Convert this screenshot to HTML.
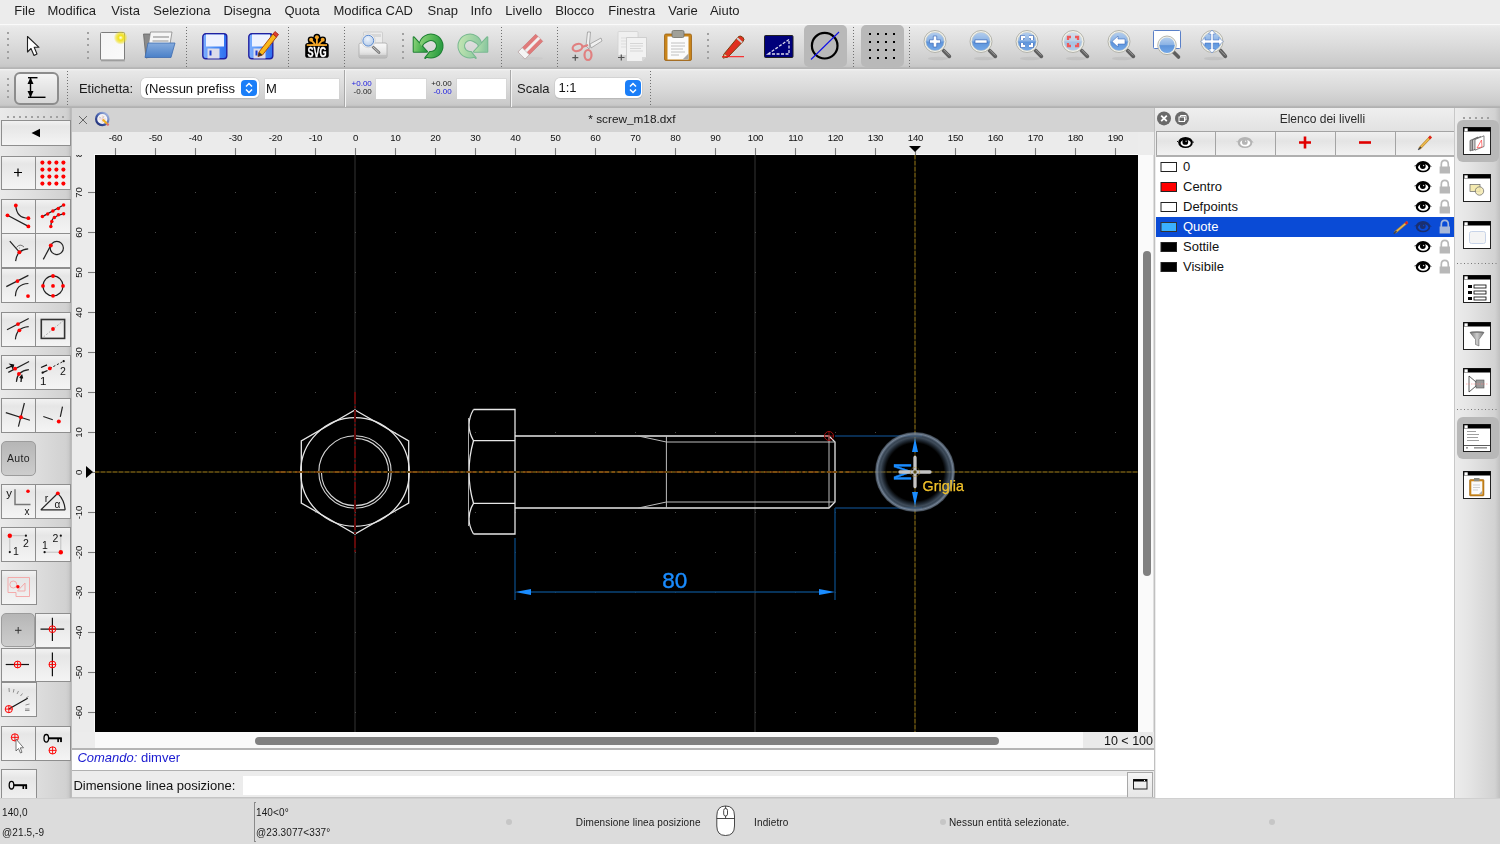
<!DOCTYPE html>
<html><head><meta charset="utf-8"><style>
html,body{margin:0;padding:0}
body{width:1500px;height:844px;overflow:hidden;position:relative;background:#ececec;font-family:"Liberation Sans", sans-serif}
.t{position:absolute;white-space:pre;line-height:1;font-family:"Liberation Sans", sans-serif}
.b{position:absolute;box-sizing:border-box}
svg.b{overflow:visible}
</style></head><body>
<div class="b" style="left:0px;top:0px;width:1500px;height:24px;background:#ececec"></div>
<div class="t" style="left:14.2px;top:4.00px;font-size:13px;color:#1e1e1e;">File</div>
<div class="t" style="left:47.5px;top:4.00px;font-size:13px;color:#1e1e1e;">Modifica</div>
<div class="t" style="left:111.3px;top:4.00px;font-size:13px;color:#1e1e1e;">Vista</div>
<div class="t" style="left:153.3px;top:4.00px;font-size:13px;color:#1e1e1e;">Seleziona</div>
<div class="t" style="left:223.4px;top:4.00px;font-size:13px;color:#1e1e1e;">Disegna</div>
<div class="t" style="left:284.4px;top:4.00px;font-size:13px;color:#1e1e1e;">Quota</div>
<div class="t" style="left:333.5px;top:4.00px;font-size:13px;color:#1e1e1e;">Modifica CAD</div>
<div class="t" style="left:427.6px;top:4.00px;font-size:13px;color:#1e1e1e;">Snap</div>
<div class="t" style="left:470.5px;top:4.00px;font-size:13px;color:#1e1e1e;">Info</div>
<div class="t" style="left:505.3px;top:4.00px;font-size:13px;color:#1e1e1e;">Livello</div>
<div class="t" style="left:555.3px;top:4.00px;font-size:13px;color:#1e1e1e;">Blocco</div>
<div class="t" style="left:608.2px;top:4.00px;font-size:13px;color:#1e1e1e;">Finestra</div>
<div class="t" style="left:668.3px;top:4.00px;font-size:13px;color:#1e1e1e;">Varie</div>
<div class="t" style="left:709.9px;top:4.00px;font-size:13px;color:#1e1e1e;">Aiuto</div>
<div class="b" style="left:0px;top:24px;width:1500px;height:45px;background:linear-gradient(#f0f0f0 0px,#e9e9e9 3px,#dcdcdc 20px,#cbcbcb 40px,#c6c6c6 42.5px,#b2b2b2 44px,#b8b8b8 45px)"></div>
<div class="b" style="left:0px;top:24px;width:1500px;height:1px;background:#fafafa"></div>
<div class="b" style="left:0px;top:69px;width:1500px;height:39px;background:linear-gradient(#f4f4f4 0px,#e8e8e8 2px,#d9d9d9 20px,#cacaca 35px,#c4c4c4 36.5px,#aeaeae 38px,#b4b4b4 39px)"></div>
<div class="b" style="left:7px;top:32.0px;width:2px;height:2px;background:#a0a0a0"></div>
<div class="b" style="left:7px;top:38.2px;width:2px;height:2px;background:#a0a0a0"></div>
<div class="b" style="left:7px;top:44.4px;width:2px;height:2px;background:#a0a0a0"></div>
<div class="b" style="left:7px;top:50.6px;width:2px;height:2px;background:#a0a0a0"></div>
<div class="b" style="left:7px;top:56.8px;width:2px;height:2px;background:#a0a0a0"></div>
<div class="b" style="left:87px;top:32.0px;width:2px;height:2px;background:#a0a0a0"></div>
<div class="b" style="left:87px;top:38.2px;width:2px;height:2px;background:#a0a0a0"></div>
<div class="b" style="left:87px;top:44.4px;width:2px;height:2px;background:#a0a0a0"></div>
<div class="b" style="left:87px;top:50.6px;width:2px;height:2px;background:#a0a0a0"></div>
<div class="b" style="left:87px;top:56.8px;width:2px;height:2px;background:#a0a0a0"></div>
<svg class="b" style="left:186px;top:27px;" width="1" height="40" viewBox="0 0 1 40"><rect x="0" y="0" width="1" height="1" fill="#707070"/><rect x="0" y="3" width="1" height="1" fill="#707070"/><rect x="0" y="6" width="1" height="1" fill="#707070"/><rect x="0" y="9" width="1" height="1" fill="#707070"/><rect x="0" y="12" width="1" height="1" fill="#707070"/><rect x="0" y="15" width="1" height="1" fill="#707070"/><rect x="0" y="18" width="1" height="1" fill="#707070"/><rect x="0" y="21" width="1" height="1" fill="#707070"/><rect x="0" y="24" width="1" height="1" fill="#707070"/><rect x="0" y="27" width="1" height="1" fill="#707070"/><rect x="0" y="30" width="1" height="1" fill="#707070"/><rect x="0" y="33" width="1" height="1" fill="#707070"/><rect x="0" y="36" width="1" height="1" fill="#707070"/><rect x="0" y="39" width="1" height="1" fill="#707070"/></svg>
<svg class="b" style="left:288px;top:27px;" width="1" height="40" viewBox="0 0 1 40"><rect x="0" y="0" width="1" height="1" fill="#707070"/><rect x="0" y="3" width="1" height="1" fill="#707070"/><rect x="0" y="6" width="1" height="1" fill="#707070"/><rect x="0" y="9" width="1" height="1" fill="#707070"/><rect x="0" y="12" width="1" height="1" fill="#707070"/><rect x="0" y="15" width="1" height="1" fill="#707070"/><rect x="0" y="18" width="1" height="1" fill="#707070"/><rect x="0" y="21" width="1" height="1" fill="#707070"/><rect x="0" y="24" width="1" height="1" fill="#707070"/><rect x="0" y="27" width="1" height="1" fill="#707070"/><rect x="0" y="30" width="1" height="1" fill="#707070"/><rect x="0" y="33" width="1" height="1" fill="#707070"/><rect x="0" y="36" width="1" height="1" fill="#707070"/><rect x="0" y="39" width="1" height="1" fill="#707070"/></svg>
<svg class="b" style="left:344px;top:27px;" width="1" height="40" viewBox="0 0 1 40"><rect x="0" y="0" width="1" height="1" fill="#707070"/><rect x="0" y="3" width="1" height="1" fill="#707070"/><rect x="0" y="6" width="1" height="1" fill="#707070"/><rect x="0" y="9" width="1" height="1" fill="#707070"/><rect x="0" y="12" width="1" height="1" fill="#707070"/><rect x="0" y="15" width="1" height="1" fill="#707070"/><rect x="0" y="18" width="1" height="1" fill="#707070"/><rect x="0" y="21" width="1" height="1" fill="#707070"/><rect x="0" y="24" width="1" height="1" fill="#707070"/><rect x="0" y="27" width="1" height="1" fill="#707070"/><rect x="0" y="30" width="1" height="1" fill="#707070"/><rect x="0" y="33" width="1" height="1" fill="#707070"/><rect x="0" y="36" width="1" height="1" fill="#707070"/><rect x="0" y="39" width="1" height="1" fill="#707070"/></svg>
<div class="b" style="left:402px;top:33px;width:2px;height:2px;background:#a0a0a0"></div>
<div class="b" style="left:402px;top:39px;width:2px;height:2px;background:#a0a0a0"></div>
<div class="b" style="left:402px;top:45px;width:2px;height:2px;background:#a0a0a0"></div>
<div class="b" style="left:402px;top:51px;width:2px;height:2px;background:#a0a0a0"></div>
<div class="b" style="left:402px;top:57px;width:2px;height:2px;background:#a0a0a0"></div>
<svg class="b" style="left:501px;top:27px;" width="1" height="40" viewBox="0 0 1 40"><rect x="0" y="0" width="1" height="1" fill="#707070"/><rect x="0" y="3" width="1" height="1" fill="#707070"/><rect x="0" y="6" width="1" height="1" fill="#707070"/><rect x="0" y="9" width="1" height="1" fill="#707070"/><rect x="0" y="12" width="1" height="1" fill="#707070"/><rect x="0" y="15" width="1" height="1" fill="#707070"/><rect x="0" y="18" width="1" height="1" fill="#707070"/><rect x="0" y="21" width="1" height="1" fill="#707070"/><rect x="0" y="24" width="1" height="1" fill="#707070"/><rect x="0" y="27" width="1" height="1" fill="#707070"/><rect x="0" y="30" width="1" height="1" fill="#707070"/><rect x="0" y="33" width="1" height="1" fill="#707070"/><rect x="0" y="36" width="1" height="1" fill="#707070"/><rect x="0" y="39" width="1" height="1" fill="#707070"/></svg>
<svg class="b" style="left:557px;top:27px;" width="1" height="40" viewBox="0 0 1 40"><rect x="0" y="0" width="1" height="1" fill="#707070"/><rect x="0" y="3" width="1" height="1" fill="#707070"/><rect x="0" y="6" width="1" height="1" fill="#707070"/><rect x="0" y="9" width="1" height="1" fill="#707070"/><rect x="0" y="12" width="1" height="1" fill="#707070"/><rect x="0" y="15" width="1" height="1" fill="#707070"/><rect x="0" y="18" width="1" height="1" fill="#707070"/><rect x="0" y="21" width="1" height="1" fill="#707070"/><rect x="0" y="24" width="1" height="1" fill="#707070"/><rect x="0" y="27" width="1" height="1" fill="#707070"/><rect x="0" y="30" width="1" height="1" fill="#707070"/><rect x="0" y="33" width="1" height="1" fill="#707070"/><rect x="0" y="36" width="1" height="1" fill="#707070"/><rect x="0" y="39" width="1" height="1" fill="#707070"/></svg>
<div class="b" style="left:707px;top:33px;width:2px;height:2px;background:#a0a0a0"></div>
<div class="b" style="left:707px;top:39px;width:2px;height:2px;background:#a0a0a0"></div>
<div class="b" style="left:707px;top:45px;width:2px;height:2px;background:#a0a0a0"></div>
<div class="b" style="left:707px;top:51px;width:2px;height:2px;background:#a0a0a0"></div>
<div class="b" style="left:707px;top:57px;width:2px;height:2px;background:#a0a0a0"></div>
<svg class="b" style="left:853px;top:27px;" width="1" height="40" viewBox="0 0 1 40"><rect x="0" y="0" width="1" height="1" fill="#707070"/><rect x="0" y="3" width="1" height="1" fill="#707070"/><rect x="0" y="6" width="1" height="1" fill="#707070"/><rect x="0" y="9" width="1" height="1" fill="#707070"/><rect x="0" y="12" width="1" height="1" fill="#707070"/><rect x="0" y="15" width="1" height="1" fill="#707070"/><rect x="0" y="18" width="1" height="1" fill="#707070"/><rect x="0" y="21" width="1" height="1" fill="#707070"/><rect x="0" y="24" width="1" height="1" fill="#707070"/><rect x="0" y="27" width="1" height="1" fill="#707070"/><rect x="0" y="30" width="1" height="1" fill="#707070"/><rect x="0" y="33" width="1" height="1" fill="#707070"/><rect x="0" y="36" width="1" height="1" fill="#707070"/><rect x="0" y="39" width="1" height="1" fill="#707070"/></svg>
<svg class="b" style="left:909px;top:27px;" width="1" height="40" viewBox="0 0 1 40"><rect x="0" y="0" width="1" height="1" fill="#707070"/><rect x="0" y="3" width="1" height="1" fill="#707070"/><rect x="0" y="6" width="1" height="1" fill="#707070"/><rect x="0" y="9" width="1" height="1" fill="#707070"/><rect x="0" y="12" width="1" height="1" fill="#707070"/><rect x="0" y="15" width="1" height="1" fill="#707070"/><rect x="0" y="18" width="1" height="1" fill="#707070"/><rect x="0" y="21" width="1" height="1" fill="#707070"/><rect x="0" y="24" width="1" height="1" fill="#707070"/><rect x="0" y="27" width="1" height="1" fill="#707070"/><rect x="0" y="30" width="1" height="1" fill="#707070"/><rect x="0" y="33" width="1" height="1" fill="#707070"/><rect x="0" y="36" width="1" height="1" fill="#707070"/><rect x="0" y="39" width="1" height="1" fill="#707070"/></svg>
<svg class="b" style="left:26px;top:35px;" width="16" height="24" viewBox="0 0 16 24"><path d="M1.5 1.5 L1.5 17 L5 13.5 L8 20.5 L11 19 L8.2 12.3 L13 12.3 Z" fill="#fff" stroke="#222" stroke-width="1.1" stroke-linejoin="round"/></svg>
<svg class="b" style="left:98px;top:30px;" width="32" height="34" viewBox="0 0 32 34"><defs><radialGradient id="glow"><stop offset="0" stop-color="#fffff0"/><stop offset="0.35" stop-color="#f2e21a"/><stop offset="0.7" stop-color="#f0e020" stop-opacity="0.6"/><stop offset="1" stop-color="#f0e020" stop-opacity="0"/></radialGradient>
<linearGradient id="pg" x1="0" y1="0" x2="1" y2="1"><stop offset="0" stop-color="#f4f4f4"/><stop offset="1" stop-color="#fafafa"/></linearGradient></defs>
<rect x="2.5" y="2.5" width="24" height="27.5" rx="1" fill="url(#pg)" stroke="#7c7c7c" stroke-width="1"/>
<rect x="3" y="30" width="24" height="1.5" fill="#999" opacity="0.6"/>
<circle cx="22.7" cy="7.7" r="7" fill="url(#glow)"/></svg>
<svg class="b" style="left:140px;top:30px;" width="38" height="32" viewBox="0 0 38 32"><defs><linearGradient id="fb" x1="0" y1="0" x2="0" y2="1"><stop offset="0" stop-color="#86acde"/><stop offset="1" stop-color="#4a80c8"/></linearGradient></defs>
<path d="M3.5 4 L10 4 L10 27 L6 28 Z" fill="#8a8a8a" stroke="#666" stroke-width="0.8"/>
<path d="M10.5 2 L32 2 L29 20 L7 24 Z" fill="#f6f6f6" stroke="#888" stroke-width="0.8"/>
<rect x="13" y="6" width="16" height="2" fill="#bbb"/><rect x="12.5" y="10" width="16" height="2" fill="#c4c4c4"/>
<path d="M8 13 L35 13 L31 27.5 L5 27.5 Z" fill="url(#fb)" stroke="#3d6cb0" stroke-width="0.8"/></svg>
<svg class="b" style="left:202px;top:33px;" width="27" height="28" viewBox="0 0 27 28"><defs><linearGradient id="flb1" x1="0" y1="0" x2="1" y2="0"><stop offset="0" stop-color="#7fb0ff"/><stop offset="0.5" stop-color="#4a8cf6"/><stop offset="1" stop-color="#2f6ef0"/></linearGradient></defs>
<rect x="0.8" y="0.8" width="24" height="25" rx="3" fill="url(#flb1)" stroke="#2020a0" stroke-width="1.4"/>
<rect x="4" y="1.5" width="18" height="12" fill="#eef2ff"/>
<rect x="5.5" y="15.5" width="12" height="10" fill="#dcdcea"/>
<rect x="7.5" y="17.5" width="2" height="5" fill="#1a3ad0"/></svg>
<svg class="b" style="left:248px;top:33px;" width="27" height="28" viewBox="0 0 27 28"><defs><linearGradient id="flb2" x1="0" y1="0" x2="1" y2="0"><stop offset="0" stop-color="#7fb0ff"/><stop offset="0.5" stop-color="#4a8cf6"/><stop offset="1" stop-color="#2f6ef0"/></linearGradient></defs>
<rect x="0.8" y="0.8" width="24" height="25" rx="3" fill="url(#flb2)" stroke="#2020a0" stroke-width="1.4"/>
<rect x="4" y="1.5" width="18" height="12" fill="#eef2ff"/>
<rect x="5.5" y="15.5" width="12" height="10" fill="#dcdcea"/>
<rect x="7.5" y="17.5" width="2" height="5" fill="#1a3ad0"/></svg>
<svg class="b" style="left:248px;top:28px;" width="30" height="30" viewBox="0 0 30 30"><path d="M11 24 L25 6 L28.5 9 L14.5 27 L10 28.5 Z" fill="#f8b81a" stroke="#b05010" stroke-width="1"/><path d="M25 6 L27 3.5 L30.5 6.5 L28.5 9Z" fill="#e04030" stroke="#a02010" stroke-width="0.8"/><path d="M10 28.5 L11 24 L14.5 27Z" fill="#333"/></svg>
<svg class="b" style="left:304px;top:33px;" width="26" height="26" viewBox="0 0 26 26"><g fill="#000" stroke="#000" stroke-width="2.6" stroke-linejoin="round">
<circle cx="12.9" cy="4.3" r="2.2"/><circle cx="7.1" cy="6.8" r="2.1"/><circle cx="18.7" cy="6.8" r="2.1"/>
<path d="M7.1 6.8 L11 11 M18.7 6.8 L14.8 11 M12.9 4.3 L12.9 11"/><path d="M5 11 L7.1 6.8 L12.9 4.3 L18.7 6.8 L21 11Z"/></g>
<rect x="1.2" y="10" width="23.5" height="14.8" rx="2.6" fill="#000"/>
<g fill="#f5a82a"><circle cx="12.9" cy="4.3" r="2"/><circle cx="7.1" cy="6.8" r="2"/><circle cx="18.7" cy="6.8" r="2"/></g>
<path d="M7.1 6.8 L11.2 11.5 M18.7 6.8 L14.6 11.5 M12.9 4.3 L12.9 11.5" stroke="#f5a82a" stroke-width="1.8"/>
<path d="M2.8 12.6 Q12.9 10 23 12.6 L23 12.8 L2.8 12.8Z" fill="#f5a82a"/><rect x="2.8" y="11.2" width="20.2" height="1.6" fill="#f5a82a"/>
<text x="0" y="0" transform="translate(13,23.6) scale(0.66,1)" text-anchor="middle" font-family="Liberation Sans" font-weight="bold" font-size="13.8" fill="#fff" stroke="#fff" stroke-width="0.3">SVG</text></svg>
<svg class="b" style="left:357px;top:31px;" width="32" height="29" viewBox="0 0 32 29"><defs><linearGradient id="pr" x1="0" y1="0" x2="0" y2="1"><stop offset="0" stop-color="#fafafa"/><stop offset="0.6" stop-color="#e6e6e6"/><stop offset="1" stop-color="#c4c4c4"/></linearGradient>
<radialGradient id="lens" cx="0.45" cy="0.35" r="0.7"><stop offset="0" stop-color="#eef4fc"/><stop offset="0.7" stop-color="#c4d6ee"/><stop offset="1" stop-color="#a8c0e0"/></radialGradient></defs>
<rect x="6.5" y="1" width="19" height="14" rx="1" fill="#ececec" stroke="#c8c8c8" stroke-width="0.8"/>
<rect x="15" y="3" width="9" height="3" fill="#d8d8d8"/>
<path d="M2 13.5 Q2 12 4 12 L28 12 Q30 12 30 13.5 L30 25.5 Q30 27 28 27 L4 27 Q2 27 2 25.5Z" fill="url(#pr)" stroke="#a8a8a8" stroke-width="0.8"/>
<rect x="2.5" y="24" width="27" height="3" fill="#b8b8b8" opacity="0.7"/>
<line x1="16" y1="16" x2="22" y2="21.5" stroke="#777" stroke-width="2.8" stroke-linecap="round"/>
<line x1="16" y1="16" x2="22" y2="21.5" stroke="#ddd" stroke-width="0.8" stroke-linecap="round"/>
<circle cx="11.3" cy="9.7" r="7" fill="#f0f0f0" stroke="#c8c8c8" stroke-width="0.6"/>
<circle cx="11.3" cy="9.7" r="5.4" fill="url(#lens)" stroke="#5a8ad0" stroke-width="1"/></svg>
<svg class="b" style="left:412px;top:32px;" width="32" height="28" viewBox="0 0 32 28"><defs><linearGradient id="ug" x1="0" y1="0" x2="1" y2="0.2"><stop offset="0" stop-color="#8ed27c"/><stop offset="0.5" stop-color="#5cbc5a"/><stop offset="1" stop-color="#2e9e44"/></linearGradient></defs><path d="M1.7 5.3 L1.7 19.7 L15 19.7 Z" fill="none" stroke="#1d7f32" stroke-width="2" stroke-linejoin="round"/><path d="M7.71 11.82 A11.5 11.5 0 1 1 14.3 24.5 L13.2 26 Q16 23 17.96 19.9 A6 6 0 1 0 16 8.8 Q11.5 10.5 9.7 14.3 Z" fill="none" stroke="#1d7f32" stroke-width="2" stroke-linejoin="round"/><path d="M1.7 5.3 L1.7 19.7 L15 19.7 Z" fill="url(#ug)"/><path d="M7.71 11.82 A11.5 11.5 0 1 1 14.3 24.5 L13.2 26 Q16 23 17.96 19.9 A6 6 0 1 0 16 8.8 Q11.5 10.5 9.7 14.3 Z" fill="url(#ug)"/></svg>
<svg class="b" style="left:459px;top:32px;" width="32" height="28" viewBox="0 0 32 28"><defs><linearGradient id="rg" x1="1" y1="0" x2="0" y2="0.2"><stop offset="0" stop-color="#c6e6b4"/><stop offset="0.5" stop-color="#a8d8a8"/><stop offset="1" stop-color="#8cc8a0"/></linearGradient></defs><g transform="translate(30,0) scale(-1,1)"><path d="M1.7 5.3 L1.7 19.7 L15 19.7 Z" fill="none" stroke="#78b890" stroke-width="2" stroke-linejoin="round"/><path d="M7.71 11.82 A11.5 11.5 0 1 1 14.3 24.5 L13.2 26 Q16 23 17.96 19.9 A6 6 0 1 0 16 8.8 Q11.5 10.5 9.7 14.3 Z" fill="none" stroke="#78b890" stroke-width="2" stroke-linejoin="round"/><path d="M1.7 5.3 L1.7 19.7 L15 19.7 Z" fill="url(#rg)"/><path d="M7.71 11.82 A11.5 11.5 0 1 1 14.3 24.5 L13.2 26 Q16 23 17.96 19.9 A6 6 0 1 0 16 8.8 Q11.5 10.5 9.7 14.3 Z" fill="url(#rg)"/></g></svg>
<svg class="b" style="left:515px;top:31px;" width="30" height="31" viewBox="0 0 30 31"><ellipse cx="17" cy="27.5" rx="11" ry="1.6" fill="#c8c8c8" opacity="0.8"/>
<g transform="rotate(-45 15 16)"><rect x="3" y="11" width="25" height="10" fill="#e07a7a" stroke="#c87070" stroke-width="0.6"/>
<rect x="3" y="14.5" width="25" height="3" fill="#f0f0f0"/><rect x="3" y="11" width="6" height="10" fill="#f4f4f4" stroke="#b0b0b0" stroke-width="0.6"/></g></svg>
<svg class="b" style="left:570px;top:30px;" width="32" height="32" viewBox="0 0 32 32"><g fill="none" stroke="#e08080" stroke-width="2.2"><ellipse cx="7.5" cy="17.5" rx="5" ry="3.5" transform="rotate(-20 7.5 17.5)"/><ellipse cx="18" cy="25" rx="3.5" ry="5"/></g>
<path d="M17.5 2 L20.5 2 L19 19 L16 16Z" fill="#f0f0f0" stroke="#909090" stroke-width="0.7"/>
<path d="M20 14 L31 8 L32 11 L21 18Z" fill="#f0f0f0" stroke="#909090" stroke-width="0.7"/>
<path d="M12 17 L18 15" stroke="#e08080" stroke-width="2.2"/>
<path d="M2.3 27.7 L8.3 27.7 M5.3 24.7 L5.3 30.7" stroke="#555" stroke-width="1.2"/></svg>
<svg class="b" style="left:616px;top:30px;" width="32" height="33" viewBox="0 0 32 33"><rect x="2" y="1.5" width="20" height="24" rx="1" fill="#f0f0f0" stroke="#d0d0d0" stroke-width="0.8"/>
<g stroke="#ddd" stroke-width="1"><line x1="5" y1="8" x2="17" y2="8"/><line x1="5" y1="11" x2="17" y2="11"/><line x1="5" y1="14" x2="17" y2="14"/><line x1="5" y1="17" x2="17" y2="17"/></g>
<path d="M10.5 7.5 L30.5 7.5 L30.5 27 L26 31.5 L10.5 31.5 Z" fill="#f2f2f2" stroke="#c8c8c8" stroke-width="0.8"/>
<path d="M30.5 27 L26 27 L26 31.5Z" fill="#d8d8d8"/>
<g stroke="#d6d6d6" stroke-width="1"><line x1="14" y1="13.5" x2="27" y2="13.5"/><line x1="14" y1="16" x2="27" y2="16"/><line x1="14" y1="18.5" x2="25" y2="18.5"/><line x1="14" y1="21" x2="27" y2="21"/></g>
<path d="M2 27.5 L8.5 27.5 M5.3 24.5 L5.3 30.5" stroke="#555" stroke-width="1.2"/></svg>
<svg class="b" style="left:663px;top:29px;" width="30" height="34" viewBox="0 0 30 34"><rect x="1.5" y="5" width="27" height="26.5" rx="1.5" fill="#c8841a" stroke="#9a6010" stroke-width="0.8"/>
<rect x="4.5" y="7.5" width="21" height="23" fill="#fbfbfb"/>
<rect x="9" y="1.5" width="12" height="7" rx="1.5" fill="#a0a098" stroke="#707068" stroke-width="0.8"/>
<g stroke="#c0c0c0" stroke-width="1"><line x1="8" y1="14" x2="22" y2="14"/><line x1="8" y1="17" x2="22" y2="17"/><line x1="8" y1="20" x2="20" y2="20"/><line x1="8" y1="23" x2="22" y2="23"/><line x1="8" y1="26" x2="16" y2="26"/></g>
<path d="M25.5 24.5 L25.5 30.5 L19.5 30.5Z" fill="#a8a8a8"/></svg>
<svg class="b" style="left:720px;top:32px;" width="28" height="28" viewBox="0 0 28 28"><path d="M4 22 L18 5 Q20 3 22.5 5 L23 5.5 Q25 7.5 23 9.5 L8 25 L3 26Z" fill="#e03020" stroke="#7a4010" stroke-width="1"/>
<path d="M17 6 L22 10.5" stroke="#d0d0d0" stroke-width="1.8"/>
<path d="M3 26 L4.5 21.5 L8 24.5Z" fill="#f0c8a0" stroke="#7a4010" stroke-width="0.6"/>
<rect x="2" y="24.2" width="22" height="1" fill="#ff1010"/></svg>
<svg class="b" style="left:764px;top:35px;" width="30" height="23" viewBox="0 0 30 23"><rect x="0.5" y="0.5" width="28.5" height="22" rx="1" fill="#00007a" stroke="#222" stroke-width="1"/><path d="M4 19 L25 4.5 L25 19 Z" fill="none" stroke="#dde" stroke-width="1.3" stroke-dasharray="3 1.5"/></svg>
<div class="b" style="left:804px;top:25px;width:43px;height:42px;background:#b9b9b9;border-radius:5px"></div>
<svg class="b" style="left:804px;top:25px;" width="43" height="42" viewBox="0 0 43 42"><circle cx="20.7" cy="20.7" r="12.8" fill="none" stroke="#000" stroke-width="2.2"/><line x1="7" y1="34.5" x2="35" y2="7" stroke="#1010e8" stroke-width="1.1"/></svg>
<div class="b" style="left:861px;top:25px;width:43px;height:42px;background:#b9b9b9;border-radius:5px"></div>
<svg class="b" style="left:861px;top:25px;" width="43" height="42" viewBox="0 0 43 42"><rect x="8" y="8" width="2" height="2" fill="#000"/><rect x="8" y="16" width="2" height="2" fill="#000"/><rect x="8" y="24" width="2" height="2" fill="#000"/><rect x="8" y="32" width="2" height="2" fill="#000"/><rect x="16" y="8" width="2" height="2" fill="#000"/><rect x="16" y="16" width="2" height="2" fill="#000"/><rect x="16" y="24" width="2" height="2" fill="#000"/><rect x="16" y="32" width="2" height="2" fill="#000"/><rect x="24" y="8" width="2" height="2" fill="#000"/><rect x="24" y="16" width="2" height="2" fill="#000"/><rect x="24" y="24" width="2" height="2" fill="#000"/><rect x="24" y="32" width="2" height="2" fill="#000"/><rect x="32" y="8" width="2" height="2" fill="#000"/><rect x="32" y="16" width="2" height="2" fill="#000"/><rect x="32" y="24" width="2" height="2" fill="#000"/><rect x="32" y="32" width="2" height="2" fill="#000"/></svg>
<svg class="b" style="left:923px;top:30px;" width="32" height="32" viewBox="0 0 32 32"><defs><linearGradient id="zl1" x1="0" y1="0" x2="0" y2="1"><stop offset="0" stop-color="#b4ceee"/><stop offset="0.48" stop-color="#8ab2e4"/><stop offset="0.52" stop-color="#5e94da"/><stop offset="1" stop-color="#74a8e8"/></linearGradient></defs>
<ellipse cx="15" cy="28.5" rx="10" ry="1.8" fill="#888" opacity="0.18"/>
<line x1="20.5" y1="20.5" x2="26.3" y2="26.3" stroke="#5e5e5e" stroke-width="3.8" stroke-linecap="round"/>
<line x1="21" y1="20.2" x2="26" y2="25.2" stroke="#a8a8a8" stroke-width="0.8" stroke-linecap="round"/>
<circle cx="12" cy="11.5" r="11" fill="#f2f2ea" stroke="#a4a49c" stroke-width="0.8"/>
<circle cx="12" cy="11.5" r="9.2" fill="url(#zl1)" opacity="1" stroke="#c8c8c0" stroke-width="0.5"/>
<path d="M10.3 6 L13.7 6 L13.7 9.8 L17.5 9.8 L17.5 13.2 L13.7 13.2 L13.7 17 L10.3 17 L10.3 13.2 L6.5 13.2 L6.5 9.8 L10.3 9.8Z" fill="#fff" stroke="#2a5ab0" stroke-width="0.6"/></svg>
<svg class="b" style="left:969px;top:30px;" width="32" height="32" viewBox="0 0 32 32"><defs><linearGradient id="zl2" x1="0" y1="0" x2="0" y2="1"><stop offset="0" stop-color="#b4ceee"/><stop offset="0.48" stop-color="#8ab2e4"/><stop offset="0.52" stop-color="#5e94da"/><stop offset="1" stop-color="#74a8e8"/></linearGradient></defs>
<ellipse cx="15" cy="28.5" rx="10" ry="1.8" fill="#888" opacity="0.18"/>
<line x1="20.5" y1="20.5" x2="26.3" y2="26.3" stroke="#5e5e5e" stroke-width="3.8" stroke-linecap="round"/>
<line x1="21" y1="20.2" x2="26" y2="25.2" stroke="#a8a8a8" stroke-width="0.8" stroke-linecap="round"/>
<circle cx="12" cy="11.5" r="11" fill="#f2f2ea" stroke="#a4a49c" stroke-width="0.8"/>
<circle cx="12" cy="11.5" r="9.2" fill="url(#zl2)" opacity="1" stroke="#c8c8c0" stroke-width="0.5"/>
<rect x="6" y="9.9" width="12" height="3.2" fill="#fff" stroke="#2a5ab0" stroke-width="0.6"/></svg>
<svg class="b" style="left:1015px;top:30px;" width="32" height="32" viewBox="0 0 32 32"><defs><linearGradient id="zl3" x1="0" y1="0" x2="0" y2="1"><stop offset="0" stop-color="#b4ceee"/><stop offset="0.48" stop-color="#8ab2e4"/><stop offset="0.52" stop-color="#5e94da"/><stop offset="1" stop-color="#74a8e8"/></linearGradient></defs>
<ellipse cx="15" cy="28.5" rx="10" ry="1.8" fill="#888" opacity="0.18"/>
<line x1="20.5" y1="20.5" x2="26.3" y2="26.3" stroke="#5e5e5e" stroke-width="3.8" stroke-linecap="round"/>
<line x1="21" y1="20.2" x2="26" y2="25.2" stroke="#a8a8a8" stroke-width="0.8" stroke-linecap="round"/>
<circle cx="12" cy="11.5" r="11" fill="#f2f2ea" stroke="#a4a49c" stroke-width="0.8"/>
<circle cx="12" cy="11.5" r="9.2" fill="url(#zl3)" opacity="1" stroke="#c8c8c0" stroke-width="0.5"/>
<g fill="none" stroke="#2a5ab0" stroke-width="3.4"><path d="M7 10 L7 7 L10 7"/><path d="M14 7 L17 7 L17 10"/><path d="M7 13 L7 16 L10 16"/><path d="M14 16 L17 16 L17 13"/></g><g fill="none" stroke="#fff" stroke-width="2.3"><path d="M7 10 L7 7 L10 7"/><path d="M14 7 L17 7 L17 10"/><path d="M7 13 L7 16 L10 16"/><path d="M14 16 L17 16 L17 13"/></g></svg>
<svg class="b" style="left:1061px;top:30px;" width="32" height="32" viewBox="0 0 32 32"><defs><linearGradient id="zl4" x1="0" y1="0" x2="0" y2="1"><stop offset="0" stop-color="#b4ceee"/><stop offset="0.48" stop-color="#8ab2e4"/><stop offset="0.52" stop-color="#5e94da"/><stop offset="1" stop-color="#74a8e8"/></linearGradient></defs>
<ellipse cx="15" cy="28.5" rx="10" ry="1.8" fill="#888" opacity="0.18"/>
<line x1="20.5" y1="20.5" x2="26.3" y2="26.3" stroke="#5e5e5e" stroke-width="3.8" stroke-linecap="round"/>
<line x1="21" y1="20.2" x2="26" y2="25.2" stroke="#a8a8a8" stroke-width="0.8" stroke-linecap="round"/>
<circle cx="12" cy="11.5" r="11" fill="#f2f2ea" stroke="#a4a49c" stroke-width="0.8"/>
<circle cx="12" cy="11.5" r="9.2" fill="url(#zl4)" opacity="0.5" stroke="#c8c8c0" stroke-width="0.5"/>
<g fill="none" stroke="#ee5a5a" stroke-width="2.3"><path d="M7 10 L7 7 L10 7"/><path d="M14 7 L17 7 L17 10"/><path d="M7 13 L7 16 L10 16"/><path d="M14 16 L17 16 L17 13"/></g></svg>
<svg class="b" style="left:1107px;top:30px;" width="32" height="32" viewBox="0 0 32 32"><defs><linearGradient id="zl5" x1="0" y1="0" x2="0" y2="1"><stop offset="0" stop-color="#b4ceee"/><stop offset="0.48" stop-color="#8ab2e4"/><stop offset="0.52" stop-color="#5e94da"/><stop offset="1" stop-color="#74a8e8"/></linearGradient></defs>
<ellipse cx="15" cy="28.5" rx="10" ry="1.8" fill="#888" opacity="0.18"/>
<line x1="20.5" y1="20.5" x2="26.3" y2="26.3" stroke="#5e5e5e" stroke-width="3.8" stroke-linecap="round"/>
<line x1="21" y1="20.2" x2="26" y2="25.2" stroke="#a8a8a8" stroke-width="0.8" stroke-linecap="round"/>
<circle cx="12" cy="11.5" r="11" fill="#f2f2ea" stroke="#a4a49c" stroke-width="0.8"/>
<circle cx="12" cy="11.5" r="9.2" fill="url(#zl5)" opacity="1" stroke="#c8c8c0" stroke-width="0.5"/>
<path d="M5 11.5 L11 6 L11 9 L18 9 L18 14 L11 14 L11 17Z" fill="#fff" stroke="#2a5ab0" stroke-width="0.5"/></svg>
<svg class="b" style="left:1153px;top:30px;" width="32" height="32" viewBox="0 0 32 32"><defs><linearGradient id="zl6" x1="0" y1="0" x2="0" y2="1"><stop offset="0" stop-color="#b4ceee"/><stop offset="0.48" stop-color="#8ab2e4"/><stop offset="0.52" stop-color="#5e94da"/><stop offset="1" stop-color="#74a8e8"/></linearGradient></defs>
<rect x="0.5" y="0.5" width="27" height="18" rx="1" fill="#fff" stroke="#5a80c8" stroke-width="1"/>
<line x1="20" y1="21.5" x2="25.5" y2="27" stroke="#5e5e5e" stroke-width="3.6" stroke-linecap="round"/>
<circle cx="14" cy="15.3" r="9.3" fill="#f2f2ea" stroke="#a4a49c" stroke-width="0.8"/>
<circle cx="14" cy="15.3" r="7.7" fill="url(#zl6)"/></svg>
<svg class="b" style="left:1199px;top:30px;" width="32" height="32" viewBox="0 0 32 32"><defs><linearGradient id="zl7" x1="0" y1="0" x2="0" y2="1"><stop offset="0" stop-color="#b4ceee"/><stop offset="0.48" stop-color="#8ab2e4"/><stop offset="0.52" stop-color="#5e94da"/><stop offset="1" stop-color="#74a8e8"/></linearGradient></defs>
<ellipse cx="15" cy="28.5" rx="10" ry="1.8" fill="#888" opacity="0.18"/>
<line x1="21.5" y1="20.5" x2="26.3" y2="26.3" stroke="#5e5e5e" stroke-width="3.8" stroke-linecap="round"/>
<line x1="21" y1="20.2" x2="26" y2="25.2" stroke="#a8a8a8" stroke-width="0.8" stroke-linecap="round"/>
<circle cx="13" cy="11.5" r="11" fill="#f2f2ea" stroke="#a4a49c" stroke-width="0.8"/>
<circle cx="13" cy="11.5" r="9.2" fill="url(#zl7)" opacity="1" stroke="#c8c8c0" stroke-width="0.5"/>
<g fill="#fff" stroke="#3a6ac0" stroke-width="0.5"><path d="M13 0 L16.5 4 L14.2 4 L14.2 10 L20 10 L20 7.5 L24 11.5 L20 15.5 L20 13 L14.2 13 L14.2 19 L16.5 19 L13 23 L9.5 19 L11.8 19 L11.8 13 L6 13 L6 15.5 L2 11.5 L6 7.5 L6 10 L11.8 10 L11.8 4 L9.5 4Z"/></g></svg>
<div class="b" style="left:7px;top:78px;width:2px;height:2px;background:#a0a0a0"></div>
<div class="b" style="left:7px;top:84px;width:2px;height:2px;background:#a0a0a0"></div>
<div class="b" style="left:7px;top:90px;width:2px;height:2px;background:#a0a0a0"></div>
<div class="b" style="left:7px;top:96px;width:2px;height:2px;background:#a0a0a0"></div>
<div class="b" style="left:14px;top:72px;width:45px;height:33px;border:2px solid #8c8c8c;border-radius:6px;background:linear-gradient(#f4f4f4,#e2e2e2 60%,#d8d8d8)"></div>
<svg class="b" style="left:14px;top:72px;" width="45" height="33" viewBox="0 0 45 33"><g stroke="#000" stroke-width="1.4" fill="none"><line x1="16.5" y1="6" x2="16.5" y2="25"/><line x1="14" y1="5.7" x2="23.5" y2="5.7"/><line x1="14" y1="25.3" x2="31.5" y2="25.3"/></g><path d="M16.5 5.5 L13.5 12 L19.5 12Z M16.5 25.5 L13.5 19 L19.5 19Z" fill="#000"/></svg>
<svg class="b" style="left:67px;top:71px;" width="1" height="34" viewBox="0 0 1 34"><rect x="0" y="0" width="1" height="1" fill="#707070"/><rect x="0" y="3" width="1" height="1" fill="#707070"/><rect x="0" y="6" width="1" height="1" fill="#707070"/><rect x="0" y="9" width="1" height="1" fill="#707070"/><rect x="0" y="12" width="1" height="1" fill="#707070"/><rect x="0" y="15" width="1" height="1" fill="#707070"/><rect x="0" y="18" width="1" height="1" fill="#707070"/><rect x="0" y="21" width="1" height="1" fill="#707070"/><rect x="0" y="24" width="1" height="1" fill="#707070"/><rect x="0" y="27" width="1" height="1" fill="#707070"/><rect x="0" y="30" width="1" height="1" fill="#707070"/><rect x="0" y="33" width="1" height="1" fill="#707070"/></svg>
<div class="t" style="left:78.9px;top:81.90px;font-size:13px;color:#1a1a1a;">Etichetta:</div>
<div class="b" style="left:141px;top:78px;width:118px;height:20px;background:#fff;border-radius:5px;box-shadow:0 0 0 0.5px #c8c8c8, 0 0.5px 1px rgba(0,0,0,0.2)"></div>
<div class="t" style="left:144.7px;top:81.90px;font-size:13px;color:#111;width:92px;overflow:hidden">(Nessun prefiss</div>
<div class="b" style="left:241px;top:80px;width:16px;height:16px;background:#1a7ef8;border-radius:4px"></div>
<svg class="b" style="left:241px;top:80px;" width="16" height="16" viewBox="0 0 16 16"><path d="M5 6.5 L8 3.5 L11 6.5 M5 9.5 L8 12.5 L11 9.5" stroke="#fff" stroke-width="1.5" fill="none"/></svg>
<div class="b" style="left:264.5px;top:79px;width:74px;height:19.5px;background:#fff;box-shadow:0 0 0 0.5px #d0d0d0"></div>
<div class="t" style="left:266px;top:82.00px;font-size:13px;color:#111;">M</div>
<div class="b" style="left:344px;top:70px;width:1px;height:37px;background:#a8a8a8"></div>
<div class="b" style="left:345px;top:70px;width:1px;height:37px;background:#f4f4f4"></div>
<div class="t" style="left:-628.2px;width:1000px;text-align:right;top:80.13px;font-size:8px;color:#2020e0;">+0.00</div>
<div class="t" style="left:-628.2px;width:1000px;text-align:right;top:87.73px;font-size:8px;color:#222;">-0.00</div>
<div class="b" style="left:376px;top:79px;width:49.5px;height:19.5px;background:#fff;box-shadow:0 0 0 0.5px #d0d0d0"></div>
<div class="t" style="left:-548.4px;width:1000px;text-align:right;top:80.13px;font-size:8px;color:#222;">+0.00</div>
<div class="t" style="left:-548.4px;width:1000px;text-align:right;top:87.73px;font-size:8px;color:#2020e0;">-0.00</div>
<div class="b" style="left:457px;top:79px;width:49px;height:19.5px;background:#fff;box-shadow:0 0 0 0.5px #d0d0d0"></div>
<div class="b" style="left:510px;top:70px;width:1px;height:37px;background:#a8a8a8"></div>
<div class="b" style="left:511px;top:70px;width:1px;height:37px;background:#f4f4f4"></div>
<div class="t" style="left:517px;top:82.00px;font-size:13px;color:#1a1a1a;">Scala</div>
<div class="b" style="left:555px;top:78px;width:87px;height:20px;background:#fff;border-radius:5px;box-shadow:0 0 0 0.5px #c8c8c8, 0 0.5px 1px rgba(0,0,0,0.2)"></div>
<div class="t" style="left:558.5px;top:81.00px;font-size:13px;color:#111;">1:1</div>
<div class="b" style="left:625px;top:80px;width:16px;height:16px;background:#1a7ef8;border-radius:4px"></div>
<svg class="b" style="left:625px;top:80px;" width="16" height="16" viewBox="0 0 16 16"><path d="M5 6.5 L8 3.5 L11 6.5 M5 9.5 L8 12.5 L11 9.5" stroke="#fff" stroke-width="1.5" fill="none"/></svg>
<svg class="b" style="left:650px;top:71px;" width="1" height="34" viewBox="0 0 1 34"><rect x="0" y="0" width="1" height="1" fill="#707070"/><rect x="0" y="3" width="1" height="1" fill="#707070"/><rect x="0" y="6" width="1" height="1" fill="#707070"/><rect x="0" y="9" width="1" height="1" fill="#707070"/><rect x="0" y="12" width="1" height="1" fill="#707070"/><rect x="0" y="15" width="1" height="1" fill="#707070"/><rect x="0" y="18" width="1" height="1" fill="#707070"/><rect x="0" y="21" width="1" height="1" fill="#707070"/><rect x="0" y="24" width="1" height="1" fill="#707070"/><rect x="0" y="27" width="1" height="1" fill="#707070"/><rect x="0" y="30" width="1" height="1" fill="#707070"/><rect x="0" y="33" width="1" height="1" fill="#707070"/></svg>
<div class="b" style="left:0px;top:108px;width:72px;height:690px;background:linear-gradient(90deg,#eaeaea 0px,#e0e0e0 30px,#d1d1d1 66px,#c9c9c9 69px,#b8b8b8 70.5px,#bcbcbc 71.5px,#d8d8d8 72px)"></div>
<div class="b" style="left:6.8px;top:116px;width:2px;height:2px;background:#a0a0a0"></div>
<div class="b" style="left:12.899999999999999px;top:116px;width:2px;height:2px;background:#a0a0a0"></div>
<div class="b" style="left:19.0px;top:116px;width:2px;height:2px;background:#a0a0a0"></div>
<div class="b" style="left:25.099999999999998px;top:116px;width:2px;height:2px;background:#a0a0a0"></div>
<div class="b" style="left:31.2px;top:116px;width:2px;height:2px;background:#a0a0a0"></div>
<div class="b" style="left:37.3px;top:116px;width:2px;height:2px;background:#a0a0a0"></div>
<div class="b" style="left:43.39999999999999px;top:116px;width:2px;height:2px;background:#a0a0a0"></div>
<div class="b" style="left:49.49999999999999px;top:116px;width:2px;height:2px;background:#a0a0a0"></div>
<div class="b" style="left:55.599999999999994px;top:116px;width:2px;height:2px;background:#a0a0a0"></div>
<div class="b" style="left:61.699999999999996px;top:116px;width:2px;height:2px;background:#a0a0a0"></div>
<div class="b" style="left:1px;top:120px;width:70px;height:26px;border:1.5px solid #8e8e8e;background:linear-gradient(#f2f2f2 0%,#e6e6e6 22%,#ececec 55%,#f4f4f4 100%)"></div>
<svg class="b" style="left:0px;top:0px;" width="72" height="844" viewBox="0 0 72 844"><path d="M31.5 133 L40 128.8 L40 137.2Z" fill="#000"/></svg>
<div class="b" style="left:0.8px;top:155.5px;width:35.9px;height:34.8px;border:1.5px solid #8e8e8e;background:linear-gradient(#f2f2f2 0%,#e6e6e6 22%,#ececec 55%,#f4f4f4 100%)"></div>
<div class="b" style="left:35.3px;top:155.5px;width:35.9px;height:34.8px;border:1.5px solid #8e8e8e;background:linear-gradient(#f2f2f2 0%,#e6e6e6 22%,#ececec 55%,#f4f4f4 100%)"></div>
<div class="b" style="left:0.8px;top:198.8px;width:35.9px;height:34.8px;border:1.5px solid #8e8e8e;background:linear-gradient(#f2f2f2 0%,#e6e6e6 22%,#ececec 55%,#f4f4f4 100%)"></div>
<div class="b" style="left:35.3px;top:198.8px;width:35.9px;height:34.8px;border:1.5px solid #8e8e8e;background:linear-gradient(#f2f2f2 0%,#e6e6e6 22%,#ececec 55%,#f4f4f4 100%)"></div>
<div class="b" style="left:0.8px;top:233.3px;width:35.9px;height:34.8px;border:1.5px solid #8e8e8e;background:linear-gradient(#f2f2f2 0%,#e6e6e6 22%,#ececec 55%,#f4f4f4 100%)"></div>
<div class="b" style="left:35.3px;top:233.3px;width:35.9px;height:34.8px;border:1.5px solid #8e8e8e;background:linear-gradient(#f2f2f2 0%,#e6e6e6 22%,#ececec 55%,#f4f4f4 100%)"></div>
<div class="b" style="left:0.8px;top:267.8px;width:35.9px;height:34.8px;border:1.5px solid #8e8e8e;background:linear-gradient(#f2f2f2 0%,#e6e6e6 22%,#ececec 55%,#f4f4f4 100%)"></div>
<div class="b" style="left:35.3px;top:267.8px;width:35.9px;height:34.8px;border:1.5px solid #8e8e8e;background:linear-gradient(#f2f2f2 0%,#e6e6e6 22%,#ececec 55%,#f4f4f4 100%)"></div>
<div class="b" style="left:0.8px;top:311.8px;width:35.9px;height:34.8px;border:1.5px solid #8e8e8e;background:linear-gradient(#f2f2f2 0%,#e6e6e6 22%,#ececec 55%,#f4f4f4 100%)"></div>
<div class="b" style="left:35.3px;top:311.8px;width:35.9px;height:34.8px;border:1.5px solid #8e8e8e;background:linear-gradient(#f2f2f2 0%,#e6e6e6 22%,#ececec 55%,#f4f4f4 100%)"></div>
<div class="b" style="left:0.8px;top:355.3px;width:35.9px;height:34.8px;border:1.5px solid #8e8e8e;background:linear-gradient(#f2f2f2 0%,#e6e6e6 22%,#ececec 55%,#f4f4f4 100%)"></div>
<div class="b" style="left:35.3px;top:355.3px;width:35.9px;height:34.8px;border:1.5px solid #8e8e8e;background:linear-gradient(#f2f2f2 0%,#e6e6e6 22%,#ececec 55%,#f4f4f4 100%)"></div>
<div class="b" style="left:0.8px;top:398.3px;width:35.9px;height:34.8px;border:1.5px solid #8e8e8e;background:linear-gradient(#f2f2f2 0%,#e6e6e6 22%,#ececec 55%,#f4f4f4 100%)"></div>
<div class="b" style="left:35.3px;top:398.3px;width:35.9px;height:34.8px;border:1.5px solid #8e8e8e;background:linear-gradient(#f2f2f2 0%,#e6e6e6 22%,#ececec 55%,#f4f4f4 100%)"></div>
<div class="b" style="left:1.3px;top:441px;width:34.5px;height:34.8px;border:1px solid #9c9c9c;border-radius:5px;background:linear-gradient(#b6b6b6,#c4c4c4 60%,#cdcdcd)"></div>
<div class="t" style="left:-481.5px;width:1000px;text-align:center;top:453.11px;font-size:10.5px;color:#222;letter-spacing:0.4px">Auto</div>
<div class="b" style="left:0.8px;top:484.3px;width:35.9px;height:34.8px;border:1.5px solid #8e8e8e;background:linear-gradient(#f2f2f2 0%,#e6e6e6 22%,#ececec 55%,#f4f4f4 100%)"></div>
<div class="b" style="left:35.3px;top:484.3px;width:35.9px;height:34.8px;border:1.5px solid #8e8e8e;background:linear-gradient(#f2f2f2 0%,#e6e6e6 22%,#ececec 55%,#f4f4f4 100%)"></div>
<div class="b" style="left:0.8px;top:527.3px;width:35.9px;height:34.8px;border:1.5px solid #8e8e8e;background:linear-gradient(#f2f2f2 0%,#e6e6e6 22%,#ececec 55%,#f4f4f4 100%)"></div>
<div class="b" style="left:35.3px;top:527.3px;width:35.9px;height:34.8px;border:1.5px solid #8e8e8e;background:linear-gradient(#f2f2f2 0%,#e6e6e6 22%,#ececec 55%,#f4f4f4 100%)"></div>
<div class="b" style="left:0.8px;top:570.3px;width:35.9px;height:34.8px;border:1.5px solid #8e8e8e;background:linear-gradient(#f2f2f2 0%,#e6e6e6 22%,#ececec 55%,#f4f4f4 100%)"></div>
<div class="b" style="left:1.3px;top:613.4px;width:34.2px;height:34px;border:1px solid #9c9c9c;border-radius:5px;background:linear-gradient(#b6b6b6,#c4c4c4 60%,#cdcdcd)"></div>
<div class="b" style="left:35.3px;top:613.4px;width:35.9px;height:34.8px;border:1.5px solid #8e8e8e;background:linear-gradient(#f2f2f2 0%,#e6e6e6 22%,#ececec 55%,#f4f4f4 100%)"></div>
<div class="b" style="left:0.8px;top:647.5px;width:35.9px;height:34.8px;border:1.5px solid #8e8e8e;background:linear-gradient(#f2f2f2 0%,#e6e6e6 22%,#ececec 55%,#f4f4f4 100%)"></div>
<div class="b" style="left:35.3px;top:647.5px;width:35.9px;height:34.8px;border:1.5px solid #8e8e8e;background:linear-gradient(#f2f2f2 0%,#e6e6e6 22%,#ececec 55%,#f4f4f4 100%)"></div>
<div class="b" style="left:0.8px;top:682.0px;width:35.9px;height:34.8px;border:1.5px solid #8e8e8e;background:linear-gradient(#f2f2f2 0%,#e6e6e6 22%,#ececec 55%,#f4f4f4 100%)"></div>
<div class="b" style="left:0.8px;top:726.3px;width:35.9px;height:34.8px;border:1.5px solid #8e8e8e;background:linear-gradient(#f2f2f2 0%,#e6e6e6 22%,#ececec 55%,#f4f4f4 100%)"></div>
<div class="b" style="left:35.3px;top:726.3px;width:35.9px;height:34.8px;border:1.5px solid #8e8e8e;background:linear-gradient(#f2f2f2 0%,#e6e6e6 22%,#ececec 55%,#f4f4f4 100%)"></div>
<div class="b" style="left:0.8px;top:769.3px;width:35.9px;height:40px;border:1.5px solid #8e8e8e;background:linear-gradient(#f2f2f2 0%,#e6e6e6 22%,#ececec 55%,#f4f4f4 100%)"></div>
<svg class="b" style="left:0px;top:0px;" width="72" height="844" viewBox="0 0 72 844"><path d="M14 172.5 L22 172.5 M18 168.5 L18 176.5" stroke="#000" stroke-width="1.2"/><circle cx="42.4" cy="162.6" r="2.05" fill="#ff0000"/><circle cx="42.4" cy="169.6" r="2.05" fill="#ff0000"/><circle cx="42.4" cy="176.6" r="2.05" fill="#ff0000"/><circle cx="42.4" cy="183.6" r="2.05" fill="#ff0000"/><circle cx="49.4" cy="162.6" r="2.05" fill="#ff0000"/><circle cx="49.4" cy="169.6" r="2.05" fill="#ff0000"/><circle cx="49.4" cy="176.6" r="2.05" fill="#ff0000"/><circle cx="49.4" cy="183.6" r="2.05" fill="#ff0000"/><circle cx="56.4" cy="162.6" r="2.05" fill="#ff0000"/><circle cx="56.4" cy="169.6" r="2.05" fill="#ff0000"/><circle cx="56.4" cy="176.6" r="2.05" fill="#ff0000"/><circle cx="56.4" cy="183.6" r="2.05" fill="#ff0000"/><circle cx="63.4" cy="162.6" r="2.05" fill="#ff0000"/><circle cx="63.4" cy="169.6" r="2.05" fill="#ff0000"/><circle cx="63.4" cy="176.6" r="2.05" fill="#ff0000"/><circle cx="63.4" cy="183.6" r="2.05" fill="#ff0000"/><path d="M7.5 215.3 L28.4 226.4 M15.8 205.5 Q16.5 218.2 28.4 218.2" stroke="#222" stroke-width="1.2" fill="none"/><circle cx="15.8" cy="205.5" r="1.9" fill="#ff0000"/><circle cx="7.5" cy="215.3" r="1.9" fill="#ff0000"/><circle cx="28.4" cy="218.2" r="1.9" fill="#ff0000"/><circle cx="28.4" cy="226.4" r="1.9" fill="#ff0000"/><path d="M42.4 216.6 L63.6 205 M50.8 226.4 Q51.5 219 54.4 217.4 Q58 214.5 63.6 213.8" stroke="#222" stroke-width="1.2" fill="none"/><circle cx="42.4" cy="216.6" r="1.75" fill="#ff0000"/><circle cx="47.6" cy="214" r="1.75" fill="#ff0000"/><circle cx="52.9" cy="211" r="1.75" fill="#ff0000"/><circle cx="58.3" cy="208.4" r="1.75" fill="#ff0000"/><circle cx="63.6" cy="205" r="1.75" fill="#ff0000"/><circle cx="50.8" cy="226.4" r="1.75" fill="#ff0000"/><circle cx="51.8" cy="221.5" r="1.75" fill="#ff0000"/><circle cx="54.4" cy="217.4" r="1.75" fill="#ff0000"/><circle cx="58.5" cy="214.8" r="1.75" fill="#ff0000"/><circle cx="63.6" cy="213.8" r="1.75" fill="#ff0000"/><path d="M9.8 241.1 L19.4 252.2 M19.4 252.2 Q16 256 15.6 261.1 M19.4 252.2 Q23 249 28.2 248.8" stroke="#222" stroke-width="1.2" fill="none"/><path d="M16.5 247.5 Q20 243 24 247" stroke="#444" stroke-width="0.7" fill="none"/><circle cx="19.5" cy="248" r="0.4" fill="#444"/><circle cx="19.4" cy="252.2" r="2" fill="#ff0000"/><circle cx="56.8" cy="248" r="6.6" fill="none" stroke="#222" stroke-width="1.2"/><path d="M43.3 259.4 L50.8 245.4" stroke="#222" stroke-width="1.2"/><circle cx="50.8" cy="245.4" r="2" fill="#ff0000"/><path d="M6.3 286.6 L28.4 275.4 M15.4 296.3 Q15.8 284 28.4 283.5" stroke="#222" stroke-width="1.2" fill="none"/><circle cx="17.5" cy="281.1" r="1.9" fill="#ff0000"/><circle cx="28" cy="296.1" r="1.9" fill="#ff0000"/><circle cx="53" cy="285.9" r="10" fill="none" stroke="#222" stroke-width="1.2"/><circle cx="53" cy="285.9" r="1.9" fill="#ff0000"/><circle cx="53" cy="276" r="1.9" fill="#ff0000"/><circle cx="53" cy="295.8" r="1.9" fill="#ff0000"/><circle cx="43" cy="285.9" r="1.9" fill="#ff0000"/><circle cx="63" cy="285.9" r="1.9" fill="#ff0000"/><path d="M7 329.7 L28.7 318.5 M15.4 339.4 Q16.5 327.5 28.7 326.7" stroke="#222" stroke-width="1.2" fill="none"/><circle cx="18" cy="324.1" r="1.9" fill="#ff0000"/><circle cx="19.4" cy="330.3" r="1.9" fill="#ff0000"/><rect x="41.3" y="319.5" width="23.3" height="18.9" fill="none" stroke="#333" stroke-width="1.6"/><path d="M43.5 337 L63.5 320.5" stroke="#999" stroke-width="0.8" stroke-dasharray="2 1.5"/><circle cx="53" cy="329" r="1.9" fill="#ff0000"/><path d="M8.3 372.4 L29.1 361.5 M16.4 381.9 Q17 371 28.9 369.7" stroke="#222" stroke-width="1.2" fill="none"/><path d="M6 368.5 L12 366 L10.5 364.5 L13.5 365 L12.7 368 L12 366.5" stroke="#111" stroke-width="1.3" fill="#111"/><path d="M21 382 L21.5 376.5 M19.8 378 L21.8 375.5 L22.6 378.5" stroke="#111" stroke-width="1.3" fill="none"/><circle cx="15.1" cy="368.7" r="1.9" fill="#ff0000"/><circle cx="18.9" cy="373.9" r="1.9" fill="#ff0000"/><path d="M49.8 368.4 L63.7 361.2" stroke="#222" stroke-width="1" stroke-dasharray="2.2 1.8"/><path d="M41 367.5 L47 364.8 M42.6 372.7 L47.5 370.5" stroke="#111" stroke-width="1.3"/><circle cx="63.7" cy="361.2" r="1.1" fill="#111"/><circle cx="42.6" cy="372.7" r="1.1" fill="#111"/><circle cx="49.8" cy="368.4" r="1.9" fill="#ff0000"/><text x="40" y="384.5" font-family="Liberation Sans" font-size="11.5" fill="#111">1</text><text x="60" y="375.2" font-family="Liberation Sans" font-size="10.5" fill="#111">2</text><path d="M5.8 412.6 L29.9 420.2 M24.4 403 L18.4 426.7 M43.3 416.5 L52.8 419.7 M62.5 406.6 L60.3 416.9" stroke="#222" stroke-width="1.2"/><circle cx="20.9" cy="417.2" r="2" fill="#ff0000"/><circle cx="58.8" cy="421.5" r="2" fill="#ff0000"/><path d="M15 489.3 L15 504.5 L30.5 504.5" stroke="#777" stroke-width="1.5" fill="none"/><circle cx="28" cy="491.2" r="1.8" fill="#ff0000"/><text x="6.3" y="497" font-family="Liberation Sans" font-size="11.5" fill="#111">y</text><text x="24.5" y="514.5" font-family="Liberation Sans" font-size="10" fill="#111">x</text><path d="M40.8 509.9 L57.8 493.3 M40.8 509.9 L65.2 509.9 M57.8 493.3 Q64.5 500 65.2 509.9" stroke="#222" stroke-width="1.2" fill="none"/><circle cx="57.8" cy="493.3" r="1.9" fill="#ff0000"/><text x="44.8" y="502" font-family="Liberation Sans" font-size="10.5" fill="#111">r</text><text x="54.6" y="507.8" font-family="Liberation Sans" font-size="10" fill="#111">α</text><path d="M9.8 535.7 L25.9 535.7 M9.8 535.7 L9.8 552.1" stroke="#bbb" stroke-width="0.9"/><circle cx="9.8" cy="535.7" r="2.2" fill="#ff0000"/><circle cx="25.9" cy="535.7" r="1.1" fill="#111"/><circle cx="9.8" cy="552.1" r="1.1" fill="#111"/><text x="13" y="554.5" font-family="Liberation Sans" font-size="10.5" fill="#111">1</text><text x="23" y="547" font-family="Liberation Sans" font-size="10.5" fill="#111">2</text><path d="M60.8 535.7 L60.8 552.2 L44.6 552.2" stroke="#bbb" stroke-width="0.9" fill="none"/><circle cx="60.8" cy="552.2" r="2.2" fill="#ff0000"/><circle cx="60.8" cy="535.7" r="1.1" fill="#111"/><circle cx="44.6" cy="552.2" r="1.1" fill="#111"/><text x="42" y="549" font-family="Liberation Sans" font-size="10.5" fill="#111">1</text><text x="52.5" y="541.5" font-family="Liberation Sans" font-size="10.5" fill="#111">2</text><path d="M8 577.5 L29.5 577.5 L29.5 596.5 L16 596.5 L16 592.5 L8 592.5 Z" fill="none" stroke="#f4a4a4" stroke-width="0.9"/><circle cx="13.3" cy="584.5" r="3.5" fill="none" stroke="#f4a4a4" stroke-width="0.9"/><path d="M25 583 L25 591 L17.5 591 Z" fill="none" stroke="#f4a4a4" stroke-width="0.9"/><circle cx="17.9" cy="586.8" r="1.7" fill="#ff0000"/><path d="M15 630.3 L21.5 630.3 M18.2 627 L18.2 633.6" stroke="#333" stroke-width="1"/><path d="M40.5 629.2 L64.2 629.2 M52.4 617.7 L52.4 641.1" stroke="#111" stroke-width="1.2"/><circle cx="52.4" cy="629.2" r="3.4" fill="none" stroke="#ff0000" stroke-width="1"/><path d="M49.0 629.2 L55.8 629.2 M52.4 625.8000000000001 L52.4 632.6" stroke="#ff0000" stroke-width="0.9"/><path d="M5.7 664.5 L29 664.5" stroke="#111" stroke-width="1.2"/><circle cx="17.6" cy="664.5" r="3.4" fill="none" stroke="#ff0000" stroke-width="1"/><path d="M14.200000000000001 664.5 L21.0 664.5 M17.6 661.1 L17.6 667.9" stroke="#ff0000" stroke-width="0.9"/><path d="M52.4 652.6 L52.4 676.2" stroke="#111" stroke-width="1.2"/><circle cx="52.4" cy="664.5" r="3.4" fill="none" stroke="#ff0000" stroke-width="1"/><path d="M49.0 664.5 L55.8 664.5 M52.4 661.1 L52.4 667.9" stroke="#ff0000" stroke-width="0.9"/><path d="M8.8 709.1 L27.7 698.3" stroke="#111" stroke-width="1.2"/><circle cx="8.8" cy="709.1" r="3.6" fill="none" stroke="#ff0000" stroke-width="1"/><path d="M5.200000000000001 709.1 L12.4 709.1 M8.8 705.5 L8.8 712.7" stroke="#ff0000" stroke-width="0.9"/><g stroke="#777" stroke-width="0.8"><path d="M9 688 L9.3 692"/><path d="M14 689 L13.3 692.5"/><path d="M18.5 691 L17 694"/><path d="M22.5 693.5 L20.5 696"/><path d="M26 698 L28.5 696.5"/><path d="M25.5 705 L29.5 704"/><path d="M25 709 L29.5 709"/><path d="M25 710.5 L29.5 710.5"/></g><circle cx="14.9" cy="737.4" r="3.6" fill="none" stroke="#ff0000" stroke-width="1"/><path d="M11.3 737.4 L18.5 737.4 M14.9 733.8 L14.9 741.0" stroke="#ff0000" stroke-width="0.9"/><path d="M16 739 L16 751 L18.5 748.5 L20.5 753 L22 752.3 L20.3 747.8 L23.5 747.8Z" fill="#fff" stroke="#555" stroke-width="0.8"/><ellipse cx="46.3" cy="738.3" rx="2.3" ry="3.8" fill="none" stroke="#000" stroke-width="1.3"/><path d="M48.599999999999994 738.3 L61.8 738.3" stroke="#000" stroke-width="2"/><rect x="57.3" y="738.3" width="1.6" height="3.8" fill="#000"/><rect x="60.099999999999994" y="738.3" width="1.8" height="3.8" fill="#000"/><circle cx="52.6" cy="750.4" r="3.6" fill="none" stroke="#ff0000" stroke-width="1"/><path d="M49.0 750.4 L56.2 750.4 M52.6 746.8 L52.6 754.0" stroke="#ff0000" stroke-width="0.9"/><ellipse cx="11.5" cy="785.2" rx="2.3" ry="3.8" fill="none" stroke="#000" stroke-width="1.3"/><path d="M13.8 785.2 L27.0 785.2" stroke="#000" stroke-width="2"/><rect x="22.5" y="785.2" width="1.6" height="3.8" fill="#000"/><rect x="25.3" y="785.2" width="1.8" height="3.8" fill="#000"/></svg>
<div class="b" style="left:72px;top:108px;width:1083px;height:690px;background:#ececec"></div>
<div class="b" style="left:72px;top:108px;width:1083px;height:24px;background:#d3d3d3"></div>
<svg class="b" style="left:77px;top:114px;" width="12" height="12" viewBox="0 0 12 12"><path d="M2 2 L10 10 M10 2 L2 10" stroke="#666" stroke-width="1"/></svg>
<svg class="b" style="left:94px;top:111px;" width="17" height="17" viewBox="0 0 17 17"><defs><linearGradient id="mdir" x1="1" y1="0" x2="0" y2="1"><stop offset="0" stop-color="#b8c8e8"/><stop offset="0.5" stop-color="#4a64b0"/><stop offset="1" stop-color="#1a2870"/></linearGradient></defs>
<circle cx="8.3" cy="8" r="6.2" fill="#f4f4f6" stroke="url(#mdir)" stroke-width="2.2"/>
<path d="M4.5 8 L12 8 M8.3 4.3 L8.3 11.7" stroke="#e8b0b0" stroke-width="0.5"/><path d="M5 6 L7 7 M10 5 L9 7" stroke="#999" stroke-width="0.5"/>
<path d="M8.8 8.5 L13.3 13" stroke="#f0b020" stroke-width="2.2"/><circle cx="13.8" cy="13.5" r="1.3" fill="#e07070"/></svg>
<div class="t" style="left:131.89999999999998px;width:1000px;text-align:center;top:113.81px;font-size:11.8px;color:#1a1a1a;">* screw_m18.dxf</div>
<div class="b" style="left:72px;top:132px;width:1066px;height:23px;background:#ebebeb"></div>
<div class="b" style="left:72px;top:155px;width:23px;height:577px;background:#ebebeb"></div>
<div class="b" style="left:94px;top:154px;width:1044px;height:578px;background:#fafafa"></div>
<div class="b" style="left:95px;top:155px;width:1043px;height:577px;background:#000"></div>
<svg class="b" style="left:0px;top:0px;" width="1500" height="844" viewBox="0 0 1500 844"><svg x="72" y="132" width="1066" height="23" overflow="hidden"><g transform="translate(-72,-132)"><line x1="115.5" y1="148" x2="115.5" y2="155" stroke="#7c7c7c" stroke-width="1.1"/><line x1="155.5" y1="148" x2="155.5" y2="155" stroke="#7c7c7c" stroke-width="1.1"/><line x1="195.5" y1="148" x2="195.5" y2="155" stroke="#7c7c7c" stroke-width="1.1"/><line x1="235.5" y1="148" x2="235.5" y2="155" stroke="#7c7c7c" stroke-width="1.1"/><line x1="275.5" y1="148" x2="275.5" y2="155" stroke="#7c7c7c" stroke-width="1.1"/><line x1="315.5" y1="148" x2="315.5" y2="155" stroke="#7c7c7c" stroke-width="1.1"/><line x1="355.5" y1="148" x2="355.5" y2="155" stroke="#7c7c7c" stroke-width="1.1"/><line x1="395.5" y1="148" x2="395.5" y2="155" stroke="#7c7c7c" stroke-width="1.1"/><line x1="435.5" y1="148" x2="435.5" y2="155" stroke="#7c7c7c" stroke-width="1.1"/><line x1="475.5" y1="148" x2="475.5" y2="155" stroke="#7c7c7c" stroke-width="1.1"/><line x1="515.5" y1="148" x2="515.5" y2="155" stroke="#7c7c7c" stroke-width="1.1"/><line x1="555.5" y1="148" x2="555.5" y2="155" stroke="#7c7c7c" stroke-width="1.1"/><line x1="595.5" y1="148" x2="595.5" y2="155" stroke="#7c7c7c" stroke-width="1.1"/><line x1="635.5" y1="148" x2="635.5" y2="155" stroke="#7c7c7c" stroke-width="1.1"/><line x1="675.5" y1="148" x2="675.5" y2="155" stroke="#7c7c7c" stroke-width="1.1"/><line x1="715.5" y1="148" x2="715.5" y2="155" stroke="#7c7c7c" stroke-width="1.1"/><line x1="755.5" y1="148" x2="755.5" y2="155" stroke="#7c7c7c" stroke-width="1.1"/><line x1="795.5" y1="148" x2="795.5" y2="155" stroke="#7c7c7c" stroke-width="1.1"/><line x1="835.5" y1="148" x2="835.5" y2="155" stroke="#7c7c7c" stroke-width="1.1"/><line x1="875.5" y1="148" x2="875.5" y2="155" stroke="#7c7c7c" stroke-width="1.1"/><line x1="915.5" y1="148" x2="915.5" y2="155" stroke="#7c7c7c" stroke-width="1.1"/><line x1="955.5" y1="148" x2="955.5" y2="155" stroke="#7c7c7c" stroke-width="1.1"/><line x1="995.5" y1="148" x2="995.5" y2="155" stroke="#7c7c7c" stroke-width="1.1"/><line x1="1035.5" y1="148" x2="1035.5" y2="155" stroke="#7c7c7c" stroke-width="1.1"/><line x1="1075.5" y1="148" x2="1075.5" y2="155" stroke="#7c7c7c" stroke-width="1.1"/><line x1="1115.5" y1="148" x2="1115.5" y2="155" stroke="#7c7c7c" stroke-width="1.1"/><path d="M909 146 L921 146 L915 152Z" fill="#000"/><text x="115.5" y="141" text-anchor="middle" font-family="Liberation Sans" font-size="9.6" fill="#111" letter-spacing="-0.2">-60</text><text x="155.5" y="141" text-anchor="middle" font-family="Liberation Sans" font-size="9.6" fill="#111" letter-spacing="-0.2">-50</text><text x="195.5" y="141" text-anchor="middle" font-family="Liberation Sans" font-size="9.6" fill="#111" letter-spacing="-0.2">-40</text><text x="235.5" y="141" text-anchor="middle" font-family="Liberation Sans" font-size="9.6" fill="#111" letter-spacing="-0.2">-30</text><text x="275.5" y="141" text-anchor="middle" font-family="Liberation Sans" font-size="9.6" fill="#111" letter-spacing="-0.2">-20</text><text x="315.5" y="141" text-anchor="middle" font-family="Liberation Sans" font-size="9.6" fill="#111" letter-spacing="-0.2">-10</text><text x="355.5" y="141" text-anchor="middle" font-family="Liberation Sans" font-size="9.6" fill="#111" letter-spacing="-0.2">0</text><text x="395.5" y="141" text-anchor="middle" font-family="Liberation Sans" font-size="9.6" fill="#111" letter-spacing="-0.2">10</text><text x="435.5" y="141" text-anchor="middle" font-family="Liberation Sans" font-size="9.6" fill="#111" letter-spacing="-0.2">20</text><text x="475.5" y="141" text-anchor="middle" font-family="Liberation Sans" font-size="9.6" fill="#111" letter-spacing="-0.2">30</text><text x="515.5" y="141" text-anchor="middle" font-family="Liberation Sans" font-size="9.6" fill="#111" letter-spacing="-0.2">40</text><text x="555.5" y="141" text-anchor="middle" font-family="Liberation Sans" font-size="9.6" fill="#111" letter-spacing="-0.2">50</text><text x="595.5" y="141" text-anchor="middle" font-family="Liberation Sans" font-size="9.6" fill="#111" letter-spacing="-0.2">60</text><text x="635.5" y="141" text-anchor="middle" font-family="Liberation Sans" font-size="9.6" fill="#111" letter-spacing="-0.2">70</text><text x="675.5" y="141" text-anchor="middle" font-family="Liberation Sans" font-size="9.6" fill="#111" letter-spacing="-0.2">80</text><text x="715.5" y="141" text-anchor="middle" font-family="Liberation Sans" font-size="9.6" fill="#111" letter-spacing="-0.2">90</text><text x="755.5" y="141" text-anchor="middle" font-family="Liberation Sans" font-size="9.6" fill="#111" letter-spacing="-0.2">100</text><text x="795.5" y="141" text-anchor="middle" font-family="Liberation Sans" font-size="9.6" fill="#111" letter-spacing="-0.2">110</text><text x="835.5" y="141" text-anchor="middle" font-family="Liberation Sans" font-size="9.6" fill="#111" letter-spacing="-0.2">120</text><text x="875.5" y="141" text-anchor="middle" font-family="Liberation Sans" font-size="9.6" fill="#111" letter-spacing="-0.2">130</text><text x="915.5" y="141" text-anchor="middle" font-family="Liberation Sans" font-size="9.6" fill="#111" letter-spacing="-0.2">140</text><text x="955.5" y="141" text-anchor="middle" font-family="Liberation Sans" font-size="9.6" fill="#111" letter-spacing="-0.2">150</text><text x="995.5" y="141" text-anchor="middle" font-family="Liberation Sans" font-size="9.6" fill="#111" letter-spacing="-0.2">160</text><text x="1035.5" y="141" text-anchor="middle" font-family="Liberation Sans" font-size="9.6" fill="#111" letter-spacing="-0.2">170</text><text x="1075.5" y="141" text-anchor="middle" font-family="Liberation Sans" font-size="9.6" fill="#111" letter-spacing="-0.2">180</text><text x="1115.5" y="141" text-anchor="middle" font-family="Liberation Sans" font-size="9.6" fill="#111" letter-spacing="-0.2">190</text></g></svg><svg x="72" y="155" width="23" height="577" overflow="hidden"><g transform="translate(-72,-155)"><line x1="88" y1="712.5" x2="95" y2="712.5" stroke="#7c7c7c" stroke-width="1.1"/><line x1="88" y1="672.5" x2="95" y2="672.5" stroke="#7c7c7c" stroke-width="1.1"/><line x1="88" y1="632.5" x2="95" y2="632.5" stroke="#7c7c7c" stroke-width="1.1"/><line x1="88" y1="592.5" x2="95" y2="592.5" stroke="#7c7c7c" stroke-width="1.1"/><line x1="88" y1="552.5" x2="95" y2="552.5" stroke="#7c7c7c" stroke-width="1.1"/><line x1="88" y1="512.5" x2="95" y2="512.5" stroke="#7c7c7c" stroke-width="1.1"/><line x1="88" y1="472.5" x2="95" y2="472.5" stroke="#7c7c7c" stroke-width="1.1"/><line x1="88" y1="432.5" x2="95" y2="432.5" stroke="#7c7c7c" stroke-width="1.1"/><line x1="88" y1="392.5" x2="95" y2="392.5" stroke="#7c7c7c" stroke-width="1.1"/><line x1="88" y1="352.5" x2="95" y2="352.5" stroke="#7c7c7c" stroke-width="1.1"/><line x1="88" y1="312.5" x2="95" y2="312.5" stroke="#7c7c7c" stroke-width="1.1"/><line x1="88" y1="272.5" x2="95" y2="272.5" stroke="#7c7c7c" stroke-width="1.1"/><line x1="88" y1="232.5" x2="95" y2="232.5" stroke="#7c7c7c" stroke-width="1.1"/><line x1="88" y1="192.5" x2="95" y2="192.5" stroke="#7c7c7c" stroke-width="1.1"/><path d="M86 466 L86 478 L93 472Z" fill="#000"/><text transform="translate(82,712.5) rotate(-90)" x="0" y="0" text-anchor="middle" font-family="Liberation Sans" font-size="9.6" fill="#111" letter-spacing="-0.2">-60</text><text transform="translate(82,672.5) rotate(-90)" x="0" y="0" text-anchor="middle" font-family="Liberation Sans" font-size="9.6" fill="#111" letter-spacing="-0.2">-50</text><text transform="translate(82,632.5) rotate(-90)" x="0" y="0" text-anchor="middle" font-family="Liberation Sans" font-size="9.6" fill="#111" letter-spacing="-0.2">-40</text><text transform="translate(82,592.5) rotate(-90)" x="0" y="0" text-anchor="middle" font-family="Liberation Sans" font-size="9.6" fill="#111" letter-spacing="-0.2">-30</text><text transform="translate(82,552.5) rotate(-90)" x="0" y="0" text-anchor="middle" font-family="Liberation Sans" font-size="9.6" fill="#111" letter-spacing="-0.2">-20</text><text transform="translate(82,512.5) rotate(-90)" x="0" y="0" text-anchor="middle" font-family="Liberation Sans" font-size="9.6" fill="#111" letter-spacing="-0.2">-10</text><text transform="translate(82,472.5) rotate(-90)" x="0" y="0" text-anchor="middle" font-family="Liberation Sans" font-size="9.6" fill="#111" letter-spacing="-0.2">0</text><text transform="translate(82,432.5) rotate(-90)" x="0" y="0" text-anchor="middle" font-family="Liberation Sans" font-size="9.6" fill="#111" letter-spacing="-0.2">10</text><text transform="translate(82,392.5) rotate(-90)" x="0" y="0" text-anchor="middle" font-family="Liberation Sans" font-size="9.6" fill="#111" letter-spacing="-0.2">20</text><text transform="translate(82,352.5) rotate(-90)" x="0" y="0" text-anchor="middle" font-family="Liberation Sans" font-size="9.6" fill="#111" letter-spacing="-0.2">30</text><text transform="translate(82,312.5) rotate(-90)" x="0" y="0" text-anchor="middle" font-family="Liberation Sans" font-size="9.6" fill="#111" letter-spacing="-0.2">40</text><text transform="translate(82,272.5) rotate(-90)" x="0" y="0" text-anchor="middle" font-family="Liberation Sans" font-size="9.6" fill="#111" letter-spacing="-0.2">50</text><text transform="translate(82,232.5) rotate(-90)" x="0" y="0" text-anchor="middle" font-family="Liberation Sans" font-size="9.6" fill="#111" letter-spacing="-0.2">60</text><text transform="translate(82,192.5) rotate(-90)" x="0" y="0" text-anchor="middle" font-family="Liberation Sans" font-size="9.6" fill="#111" letter-spacing="-0.2">70</text><text transform="translate(82,152) rotate(-90)" x="0" y="0" text-anchor="middle" font-family="Liberation Sans" font-size="9.6" fill="#111" letter-spacing="-0.2">80</text></g></svg></svg>
<svg class="b" style="left:0px;top:0px;" width="1500" height="844" viewBox="0 0 1500 844"><svg x="95" y="155" width="1043" height="577" overflow="hidden"><g transform="translate(-95,-155)"><line x1="355" y1="155" x2="355" y2="732" stroke="#1a1a1a" stroke-width="2"/><line x1="755" y1="155" x2="755" y2="732" stroke="#1a1a1a" stroke-width="2"/><rect x="115" y="712" width="1" height="1" fill="#484848"/><rect x="115" y="672" width="1" height="1" fill="#484848"/><rect x="115" y="632" width="1" height="1" fill="#484848"/><rect x="115" y="592" width="1" height="1" fill="#484848"/><rect x="115" y="552" width="1" height="1" fill="#484848"/><rect x="115" y="512" width="1" height="1" fill="#484848"/><rect x="115" y="472" width="1" height="1" fill="#484848"/><rect x="115" y="432" width="1" height="1" fill="#484848"/><rect x="115" y="392" width="1" height="1" fill="#484848"/><rect x="115" y="352" width="1" height="1" fill="#484848"/><rect x="115" y="312" width="1" height="1" fill="#484848"/><rect x="115" y="272" width="1" height="1" fill="#484848"/><rect x="115" y="232" width="1" height="1" fill="#484848"/><rect x="115" y="192" width="1" height="1" fill="#484848"/><rect x="155" y="712" width="1" height="1" fill="#484848"/><rect x="155" y="672" width="1" height="1" fill="#484848"/><rect x="155" y="632" width="1" height="1" fill="#484848"/><rect x="155" y="592" width="1" height="1" fill="#484848"/><rect x="155" y="552" width="1" height="1" fill="#484848"/><rect x="155" y="512" width="1" height="1" fill="#484848"/><rect x="155" y="472" width="1" height="1" fill="#484848"/><rect x="155" y="432" width="1" height="1" fill="#484848"/><rect x="155" y="392" width="1" height="1" fill="#484848"/><rect x="155" y="352" width="1" height="1" fill="#484848"/><rect x="155" y="312" width="1" height="1" fill="#484848"/><rect x="155" y="272" width="1" height="1" fill="#484848"/><rect x="155" y="232" width="1" height="1" fill="#484848"/><rect x="155" y="192" width="1" height="1" fill="#484848"/><rect x="195" y="712" width="1" height="1" fill="#484848"/><rect x="195" y="672" width="1" height="1" fill="#484848"/><rect x="195" y="632" width="1" height="1" fill="#484848"/><rect x="195" y="592" width="1" height="1" fill="#484848"/><rect x="195" y="552" width="1" height="1" fill="#484848"/><rect x="195" y="512" width="1" height="1" fill="#484848"/><rect x="195" y="472" width="1" height="1" fill="#484848"/><rect x="195" y="432" width="1" height="1" fill="#484848"/><rect x="195" y="392" width="1" height="1" fill="#484848"/><rect x="195" y="352" width="1" height="1" fill="#484848"/><rect x="195" y="312" width="1" height="1" fill="#484848"/><rect x="195" y="272" width="1" height="1" fill="#484848"/><rect x="195" y="232" width="1" height="1" fill="#484848"/><rect x="195" y="192" width="1" height="1" fill="#484848"/><rect x="235" y="712" width="1" height="1" fill="#484848"/><rect x="235" y="672" width="1" height="1" fill="#484848"/><rect x="235" y="632" width="1" height="1" fill="#484848"/><rect x="235" y="592" width="1" height="1" fill="#484848"/><rect x="235" y="552" width="1" height="1" fill="#484848"/><rect x="235" y="512" width="1" height="1" fill="#484848"/><rect x="235" y="472" width="1" height="1" fill="#484848"/><rect x="235" y="432" width="1" height="1" fill="#484848"/><rect x="235" y="392" width="1" height="1" fill="#484848"/><rect x="235" y="352" width="1" height="1" fill="#484848"/><rect x="235" y="312" width="1" height="1" fill="#484848"/><rect x="235" y="272" width="1" height="1" fill="#484848"/><rect x="235" y="232" width="1" height="1" fill="#484848"/><rect x="235" y="192" width="1" height="1" fill="#484848"/><rect x="275" y="712" width="1" height="1" fill="#484848"/><rect x="275" y="672" width="1" height="1" fill="#484848"/><rect x="275" y="632" width="1" height="1" fill="#484848"/><rect x="275" y="592" width="1" height="1" fill="#484848"/><rect x="275" y="552" width="1" height="1" fill="#484848"/><rect x="275" y="512" width="1" height="1" fill="#484848"/><rect x="275" y="472" width="1" height="1" fill="#484848"/><rect x="275" y="432" width="1" height="1" fill="#484848"/><rect x="275" y="392" width="1" height="1" fill="#484848"/><rect x="275" y="352" width="1" height="1" fill="#484848"/><rect x="275" y="312" width="1" height="1" fill="#484848"/><rect x="275" y="272" width="1" height="1" fill="#484848"/><rect x="275" y="232" width="1" height="1" fill="#484848"/><rect x="275" y="192" width="1" height="1" fill="#484848"/><rect x="315" y="712" width="1" height="1" fill="#484848"/><rect x="315" y="672" width="1" height="1" fill="#484848"/><rect x="315" y="632" width="1" height="1" fill="#484848"/><rect x="315" y="592" width="1" height="1" fill="#484848"/><rect x="315" y="552" width="1" height="1" fill="#484848"/><rect x="315" y="512" width="1" height="1" fill="#484848"/><rect x="315" y="472" width="1" height="1" fill="#484848"/><rect x="315" y="432" width="1" height="1" fill="#484848"/><rect x="315" y="392" width="1" height="1" fill="#484848"/><rect x="315" y="352" width="1" height="1" fill="#484848"/><rect x="315" y="312" width="1" height="1" fill="#484848"/><rect x="315" y="272" width="1" height="1" fill="#484848"/><rect x="315" y="232" width="1" height="1" fill="#484848"/><rect x="315" y="192" width="1" height="1" fill="#484848"/><rect x="355" y="712" width="1" height="1" fill="#484848"/><rect x="355" y="672" width="1" height="1" fill="#484848"/><rect x="355" y="632" width="1" height="1" fill="#484848"/><rect x="355" y="592" width="1" height="1" fill="#484848"/><rect x="355" y="552" width="1" height="1" fill="#484848"/><rect x="355" y="512" width="1" height="1" fill="#484848"/><rect x="355" y="472" width="1" height="1" fill="#484848"/><rect x="355" y="432" width="1" height="1" fill="#484848"/><rect x="355" y="392" width="1" height="1" fill="#484848"/><rect x="355" y="352" width="1" height="1" fill="#484848"/><rect x="355" y="312" width="1" height="1" fill="#484848"/><rect x="355" y="272" width="1" height="1" fill="#484848"/><rect x="355" y="232" width="1" height="1" fill="#484848"/><rect x="355" y="192" width="1" height="1" fill="#484848"/><rect x="395" y="712" width="1" height="1" fill="#484848"/><rect x="395" y="672" width="1" height="1" fill="#484848"/><rect x="395" y="632" width="1" height="1" fill="#484848"/><rect x="395" y="592" width="1" height="1" fill="#484848"/><rect x="395" y="552" width="1" height="1" fill="#484848"/><rect x="395" y="512" width="1" height="1" fill="#484848"/><rect x="395" y="472" width="1" height="1" fill="#484848"/><rect x="395" y="432" width="1" height="1" fill="#484848"/><rect x="395" y="392" width="1" height="1" fill="#484848"/><rect x="395" y="352" width="1" height="1" fill="#484848"/><rect x="395" y="312" width="1" height="1" fill="#484848"/><rect x="395" y="272" width="1" height="1" fill="#484848"/><rect x="395" y="232" width="1" height="1" fill="#484848"/><rect x="395" y="192" width="1" height="1" fill="#484848"/><rect x="435" y="712" width="1" height="1" fill="#484848"/><rect x="435" y="672" width="1" height="1" fill="#484848"/><rect x="435" y="632" width="1" height="1" fill="#484848"/><rect x="435" y="592" width="1" height="1" fill="#484848"/><rect x="435" y="552" width="1" height="1" fill="#484848"/><rect x="435" y="512" width="1" height="1" fill="#484848"/><rect x="435" y="472" width="1" height="1" fill="#484848"/><rect x="435" y="432" width="1" height="1" fill="#484848"/><rect x="435" y="392" width="1" height="1" fill="#484848"/><rect x="435" y="352" width="1" height="1" fill="#484848"/><rect x="435" y="312" width="1" height="1" fill="#484848"/><rect x="435" y="272" width="1" height="1" fill="#484848"/><rect x="435" y="232" width="1" height="1" fill="#484848"/><rect x="435" y="192" width="1" height="1" fill="#484848"/><rect x="475" y="712" width="1" height="1" fill="#484848"/><rect x="475" y="672" width="1" height="1" fill="#484848"/><rect x="475" y="632" width="1" height="1" fill="#484848"/><rect x="475" y="592" width="1" height="1" fill="#484848"/><rect x="475" y="552" width="1" height="1" fill="#484848"/><rect x="475" y="512" width="1" height="1" fill="#484848"/><rect x="475" y="472" width="1" height="1" fill="#484848"/><rect x="475" y="432" width="1" height="1" fill="#484848"/><rect x="475" y="392" width="1" height="1" fill="#484848"/><rect x="475" y="352" width="1" height="1" fill="#484848"/><rect x="475" y="312" width="1" height="1" fill="#484848"/><rect x="475" y="272" width="1" height="1" fill="#484848"/><rect x="475" y="232" width="1" height="1" fill="#484848"/><rect x="475" y="192" width="1" height="1" fill="#484848"/><rect x="515" y="712" width="1" height="1" fill="#484848"/><rect x="515" y="672" width="1" height="1" fill="#484848"/><rect x="515" y="632" width="1" height="1" fill="#484848"/><rect x="515" y="592" width="1" height="1" fill="#484848"/><rect x="515" y="552" width="1" height="1" fill="#484848"/><rect x="515" y="512" width="1" height="1" fill="#484848"/><rect x="515" y="472" width="1" height="1" fill="#484848"/><rect x="515" y="432" width="1" height="1" fill="#484848"/><rect x="515" y="392" width="1" height="1" fill="#484848"/><rect x="515" y="352" width="1" height="1" fill="#484848"/><rect x="515" y="312" width="1" height="1" fill="#484848"/><rect x="515" y="272" width="1" height="1" fill="#484848"/><rect x="515" y="232" width="1" height="1" fill="#484848"/><rect x="515" y="192" width="1" height="1" fill="#484848"/><rect x="555" y="712" width="1" height="1" fill="#484848"/><rect x="555" y="672" width="1" height="1" fill="#484848"/><rect x="555" y="632" width="1" height="1" fill="#484848"/><rect x="555" y="592" width="1" height="1" fill="#484848"/><rect x="555" y="552" width="1" height="1" fill="#484848"/><rect x="555" y="512" width="1" height="1" fill="#484848"/><rect x="555" y="472" width="1" height="1" fill="#484848"/><rect x="555" y="432" width="1" height="1" fill="#484848"/><rect x="555" y="392" width="1" height="1" fill="#484848"/><rect x="555" y="352" width="1" height="1" fill="#484848"/><rect x="555" y="312" width="1" height="1" fill="#484848"/><rect x="555" y="272" width="1" height="1" fill="#484848"/><rect x="555" y="232" width="1" height="1" fill="#484848"/><rect x="555" y="192" width="1" height="1" fill="#484848"/><rect x="595" y="712" width="1" height="1" fill="#484848"/><rect x="595" y="672" width="1" height="1" fill="#484848"/><rect x="595" y="632" width="1" height="1" fill="#484848"/><rect x="595" y="592" width="1" height="1" fill="#484848"/><rect x="595" y="552" width="1" height="1" fill="#484848"/><rect x="595" y="512" width="1" height="1" fill="#484848"/><rect x="595" y="472" width="1" height="1" fill="#484848"/><rect x="595" y="432" width="1" height="1" fill="#484848"/><rect x="595" y="392" width="1" height="1" fill="#484848"/><rect x="595" y="352" width="1" height="1" fill="#484848"/><rect x="595" y="312" width="1" height="1" fill="#484848"/><rect x="595" y="272" width="1" height="1" fill="#484848"/><rect x="595" y="232" width="1" height="1" fill="#484848"/><rect x="595" y="192" width="1" height="1" fill="#484848"/><rect x="635" y="712" width="1" height="1" fill="#484848"/><rect x="635" y="672" width="1" height="1" fill="#484848"/><rect x="635" y="632" width="1" height="1" fill="#484848"/><rect x="635" y="592" width="1" height="1" fill="#484848"/><rect x="635" y="552" width="1" height="1" fill="#484848"/><rect x="635" y="512" width="1" height="1" fill="#484848"/><rect x="635" y="472" width="1" height="1" fill="#484848"/><rect x="635" y="432" width="1" height="1" fill="#484848"/><rect x="635" y="392" width="1" height="1" fill="#484848"/><rect x="635" y="352" width="1" height="1" fill="#484848"/><rect x="635" y="312" width="1" height="1" fill="#484848"/><rect x="635" y="272" width="1" height="1" fill="#484848"/><rect x="635" y="232" width="1" height="1" fill="#484848"/><rect x="635" y="192" width="1" height="1" fill="#484848"/><rect x="675" y="712" width="1" height="1" fill="#484848"/><rect x="675" y="672" width="1" height="1" fill="#484848"/><rect x="675" y="632" width="1" height="1" fill="#484848"/><rect x="675" y="592" width="1" height="1" fill="#484848"/><rect x="675" y="552" width="1" height="1" fill="#484848"/><rect x="675" y="512" width="1" height="1" fill="#484848"/><rect x="675" y="472" width="1" height="1" fill="#484848"/><rect x="675" y="432" width="1" height="1" fill="#484848"/><rect x="675" y="392" width="1" height="1" fill="#484848"/><rect x="675" y="352" width="1" height="1" fill="#484848"/><rect x="675" y="312" width="1" height="1" fill="#484848"/><rect x="675" y="272" width="1" height="1" fill="#484848"/><rect x="675" y="232" width="1" height="1" fill="#484848"/><rect x="675" y="192" width="1" height="1" fill="#484848"/><rect x="715" y="712" width="1" height="1" fill="#484848"/><rect x="715" y="672" width="1" height="1" fill="#484848"/><rect x="715" y="632" width="1" height="1" fill="#484848"/><rect x="715" y="592" width="1" height="1" fill="#484848"/><rect x="715" y="552" width="1" height="1" fill="#484848"/><rect x="715" y="512" width="1" height="1" fill="#484848"/><rect x="715" y="472" width="1" height="1" fill="#484848"/><rect x="715" y="432" width="1" height="1" fill="#484848"/><rect x="715" y="392" width="1" height="1" fill="#484848"/><rect x="715" y="352" width="1" height="1" fill="#484848"/><rect x="715" y="312" width="1" height="1" fill="#484848"/><rect x="715" y="272" width="1" height="1" fill="#484848"/><rect x="715" y="232" width="1" height="1" fill="#484848"/><rect x="715" y="192" width="1" height="1" fill="#484848"/><rect x="755" y="712" width="1" height="1" fill="#484848"/><rect x="755" y="672" width="1" height="1" fill="#484848"/><rect x="755" y="632" width="1" height="1" fill="#484848"/><rect x="755" y="592" width="1" height="1" fill="#484848"/><rect x="755" y="552" width="1" height="1" fill="#484848"/><rect x="755" y="512" width="1" height="1" fill="#484848"/><rect x="755" y="472" width="1" height="1" fill="#484848"/><rect x="755" y="432" width="1" height="1" fill="#484848"/><rect x="755" y="392" width="1" height="1" fill="#484848"/><rect x="755" y="352" width="1" height="1" fill="#484848"/><rect x="755" y="312" width="1" height="1" fill="#484848"/><rect x="755" y="272" width="1" height="1" fill="#484848"/><rect x="755" y="232" width="1" height="1" fill="#484848"/><rect x="755" y="192" width="1" height="1" fill="#484848"/><rect x="795" y="712" width="1" height="1" fill="#484848"/><rect x="795" y="672" width="1" height="1" fill="#484848"/><rect x="795" y="632" width="1" height="1" fill="#484848"/><rect x="795" y="592" width="1" height="1" fill="#484848"/><rect x="795" y="552" width="1" height="1" fill="#484848"/><rect x="795" y="512" width="1" height="1" fill="#484848"/><rect x="795" y="472" width="1" height="1" fill="#484848"/><rect x="795" y="432" width="1" height="1" fill="#484848"/><rect x="795" y="392" width="1" height="1" fill="#484848"/><rect x="795" y="352" width="1" height="1" fill="#484848"/><rect x="795" y="312" width="1" height="1" fill="#484848"/><rect x="795" y="272" width="1" height="1" fill="#484848"/><rect x="795" y="232" width="1" height="1" fill="#484848"/><rect x="795" y="192" width="1" height="1" fill="#484848"/><rect x="835" y="712" width="1" height="1" fill="#484848"/><rect x="835" y="672" width="1" height="1" fill="#484848"/><rect x="835" y="632" width="1" height="1" fill="#484848"/><rect x="835" y="592" width="1" height="1" fill="#484848"/><rect x="835" y="552" width="1" height="1" fill="#484848"/><rect x="835" y="512" width="1" height="1" fill="#484848"/><rect x="835" y="472" width="1" height="1" fill="#484848"/><rect x="835" y="432" width="1" height="1" fill="#484848"/><rect x="835" y="392" width="1" height="1" fill="#484848"/><rect x="835" y="352" width="1" height="1" fill="#484848"/><rect x="835" y="312" width="1" height="1" fill="#484848"/><rect x="835" y="272" width="1" height="1" fill="#484848"/><rect x="835" y="232" width="1" height="1" fill="#484848"/><rect x="835" y="192" width="1" height="1" fill="#484848"/><rect x="875" y="712" width="1" height="1" fill="#484848"/><rect x="875" y="672" width="1" height="1" fill="#484848"/><rect x="875" y="632" width="1" height="1" fill="#484848"/><rect x="875" y="592" width="1" height="1" fill="#484848"/><rect x="875" y="552" width="1" height="1" fill="#484848"/><rect x="875" y="512" width="1" height="1" fill="#484848"/><rect x="875" y="472" width="1" height="1" fill="#484848"/><rect x="875" y="432" width="1" height="1" fill="#484848"/><rect x="875" y="392" width="1" height="1" fill="#484848"/><rect x="875" y="352" width="1" height="1" fill="#484848"/><rect x="875" y="312" width="1" height="1" fill="#484848"/><rect x="875" y="272" width="1" height="1" fill="#484848"/><rect x="875" y="232" width="1" height="1" fill="#484848"/><rect x="875" y="192" width="1" height="1" fill="#484848"/><rect x="915" y="712" width="1" height="1" fill="#484848"/><rect x="915" y="672" width="1" height="1" fill="#484848"/><rect x="915" y="632" width="1" height="1" fill="#484848"/><rect x="915" y="592" width="1" height="1" fill="#484848"/><rect x="915" y="552" width="1" height="1" fill="#484848"/><rect x="915" y="512" width="1" height="1" fill="#484848"/><rect x="915" y="472" width="1" height="1" fill="#484848"/><rect x="915" y="432" width="1" height="1" fill="#484848"/><rect x="915" y="392" width="1" height="1" fill="#484848"/><rect x="915" y="352" width="1" height="1" fill="#484848"/><rect x="915" y="312" width="1" height="1" fill="#484848"/><rect x="915" y="272" width="1" height="1" fill="#484848"/><rect x="915" y="232" width="1" height="1" fill="#484848"/><rect x="915" y="192" width="1" height="1" fill="#484848"/><rect x="955" y="712" width="1" height="1" fill="#484848"/><rect x="955" y="672" width="1" height="1" fill="#484848"/><rect x="955" y="632" width="1" height="1" fill="#484848"/><rect x="955" y="592" width="1" height="1" fill="#484848"/><rect x="955" y="552" width="1" height="1" fill="#484848"/><rect x="955" y="512" width="1" height="1" fill="#484848"/><rect x="955" y="472" width="1" height="1" fill="#484848"/><rect x="955" y="432" width="1" height="1" fill="#484848"/><rect x="955" y="392" width="1" height="1" fill="#484848"/><rect x="955" y="352" width="1" height="1" fill="#484848"/><rect x="955" y="312" width="1" height="1" fill="#484848"/><rect x="955" y="272" width="1" height="1" fill="#484848"/><rect x="955" y="232" width="1" height="1" fill="#484848"/><rect x="955" y="192" width="1" height="1" fill="#484848"/><rect x="995" y="712" width="1" height="1" fill="#484848"/><rect x="995" y="672" width="1" height="1" fill="#484848"/><rect x="995" y="632" width="1" height="1" fill="#484848"/><rect x="995" y="592" width="1" height="1" fill="#484848"/><rect x="995" y="552" width="1" height="1" fill="#484848"/><rect x="995" y="512" width="1" height="1" fill="#484848"/><rect x="995" y="472" width="1" height="1" fill="#484848"/><rect x="995" y="432" width="1" height="1" fill="#484848"/><rect x="995" y="392" width="1" height="1" fill="#484848"/><rect x="995" y="352" width="1" height="1" fill="#484848"/><rect x="995" y="312" width="1" height="1" fill="#484848"/><rect x="995" y="272" width="1" height="1" fill="#484848"/><rect x="995" y="232" width="1" height="1" fill="#484848"/><rect x="995" y="192" width="1" height="1" fill="#484848"/><rect x="1035" y="712" width="1" height="1" fill="#484848"/><rect x="1035" y="672" width="1" height="1" fill="#484848"/><rect x="1035" y="632" width="1" height="1" fill="#484848"/><rect x="1035" y="592" width="1" height="1" fill="#484848"/><rect x="1035" y="552" width="1" height="1" fill="#484848"/><rect x="1035" y="512" width="1" height="1" fill="#484848"/><rect x="1035" y="472" width="1" height="1" fill="#484848"/><rect x="1035" y="432" width="1" height="1" fill="#484848"/><rect x="1035" y="392" width="1" height="1" fill="#484848"/><rect x="1035" y="352" width="1" height="1" fill="#484848"/><rect x="1035" y="312" width="1" height="1" fill="#484848"/><rect x="1035" y="272" width="1" height="1" fill="#484848"/><rect x="1035" y="232" width="1" height="1" fill="#484848"/><rect x="1035" y="192" width="1" height="1" fill="#484848"/><rect x="1075" y="712" width="1" height="1" fill="#484848"/><rect x="1075" y="672" width="1" height="1" fill="#484848"/><rect x="1075" y="632" width="1" height="1" fill="#484848"/><rect x="1075" y="592" width="1" height="1" fill="#484848"/><rect x="1075" y="552" width="1" height="1" fill="#484848"/><rect x="1075" y="512" width="1" height="1" fill="#484848"/><rect x="1075" y="472" width="1" height="1" fill="#484848"/><rect x="1075" y="432" width="1" height="1" fill="#484848"/><rect x="1075" y="392" width="1" height="1" fill="#484848"/><rect x="1075" y="352" width="1" height="1" fill="#484848"/><rect x="1075" y="312" width="1" height="1" fill="#484848"/><rect x="1075" y="272" width="1" height="1" fill="#484848"/><rect x="1075" y="232" width="1" height="1" fill="#484848"/><rect x="1075" y="192" width="1" height="1" fill="#484848"/><rect x="1115" y="712" width="1" height="1" fill="#484848"/><rect x="1115" y="672" width="1" height="1" fill="#484848"/><rect x="1115" y="632" width="1" height="1" fill="#484848"/><rect x="1115" y="592" width="1" height="1" fill="#484848"/><rect x="1115" y="552" width="1" height="1" fill="#484848"/><rect x="1115" y="512" width="1" height="1" fill="#484848"/><rect x="1115" y="472" width="1" height="1" fill="#484848"/><rect x="1115" y="432" width="1" height="1" fill="#484848"/><rect x="1115" y="392" width="1" height="1" fill="#484848"/><rect x="1115" y="352" width="1" height="1" fill="#484848"/><rect x="1115" y="312" width="1" height="1" fill="#484848"/><rect x="1115" y="272" width="1" height="1" fill="#484848"/><rect x="1115" y="232" width="1" height="1" fill="#484848"/><rect x="1115" y="192" width="1" height="1" fill="#484848"/><polygon points="355.00,410.00 408.69,441.00 408.69,503.00 355.00,534.00 301.31,503.00 301.31,441.00" fill="none" stroke="#e6e6e6" stroke-width="1.3"/><circle cx="355" cy="472" r="54.3" fill="none" stroke="#e6e6e6" stroke-width="1.3"/><circle cx="355" cy="472" r="36.2" fill="none" stroke="#d4d4d4" stroke-width="1.1"/><path d="M321.4 472 A33.6 33.6 0 1 0 355 438.4" fill="none" stroke="#d4d4d4" stroke-width="1.1"/><line x1="355" y1="392" x2="355" y2="552" stroke="#620a0a" stroke-width="2" stroke-dasharray="12 2 2 2"/><path d="M473.5 409.5 L515 409.5 L515 534 L473.5 534 M473.5 440.7 L515 440.7 M473.5 503.3 L515 503.3" fill="none" stroke="#e6e6e6" stroke-width="1.3"/><path d="M473.5 409.5 Q464.5 425 473.5 440.7 Q464.5 472 473.5 503.3 Q464.5 518.6 473.5 534" fill="none" stroke="#e6e6e6" stroke-width="1.3"/><line x1="468.5" y1="418" x2="468.5" y2="526" stroke="#aaa" stroke-width="1"/><path d="M515 436 L829 436 L835 442 L835 502 L829 508 L515 508" fill="none" stroke="#e6e6e6" stroke-width="1.3"/><path d="M638.4 436 L666.4 442 L835 442 M638.4 508 L666.4 502 L835 502 M666.4 436 L666.4 508 M829 436 L829 508" fill="none" stroke="#bdbdbd" stroke-width="1"/><line x1="95" y1="472" x2="1138" y2="472" stroke="#2a2208" stroke-width="2"/><line x1="95" y1="472" x2="1138" y2="472" stroke="#54420e" stroke-width="2" stroke-dasharray="4 2"/><line x1="276" y1="472" x2="851" y2="472" stroke="#3c1002" stroke-width="2" stroke-dasharray="10 3 3 3" style="mix-blend-mode:screen"/><line x1="915" y1="155" x2="915" y2="732" stroke="#1e1806" stroke-width="2"/><line x1="915" y1="155" x2="915" y2="732" stroke="#4e3e0c" stroke-width="2" stroke-dasharray="4.2 1.8"/><line x1="515" y1="538" x2="515" y2="600" stroke="#0a4478" stroke-width="1.4"/><line x1="835" y1="508" x2="835" y2="600" stroke="#0a4478" stroke-width="1.4"/><line x1="525" y1="592" x2="825" y2="592" stroke="#0a4478" stroke-width="1.4"/><path d="M515 592 L531 589 L531 595Z M835 592 L819 589 L819 595Z" fill="#1a8cff"/><text x="674.8" y="588" text-anchor="middle" font-family="Liberation Sans" font-size="22.5" fill="#1a8cff" stroke="#1a8cff" stroke-width="0.4">80</text><line x1="835" y1="436" x2="922" y2="436" stroke="#0c3c6c" stroke-width="1.5"/><line x1="835" y1="508" x2="922" y2="508" stroke="#0c3c6c" stroke-width="1.5"/><circle cx="829" cy="436" r="4.5" fill="none" stroke="#a01010" stroke-width="1"/><path d="M824.5 436 L833.5 436 M829 431.5 L829 440.5" stroke="#a01010" stroke-width="0.8"/><defs><radialGradient id="ring" cx="0.5" cy="0.5" r="0.5">
<stop offset="0.72" stop-color="#3a4a5a" stop-opacity="0"/>
<stop offset="0.8" stop-color="#3e5064" stop-opacity="0.5"/>
<stop offset="0.86" stop-color="#5a6c80" stop-opacity="0.7"/>
<stop offset="0.9" stop-color="#4a5c70" stop-opacity="0.75"/>
<stop offset="0.95" stop-color="#8090a4" stop-opacity="0.9"/>
<stop offset="1" stop-color="#6a7a8c" stop-opacity="0.5"/></radialGradient></defs><circle cx="915" cy="472" r="40" fill="url(#ring)"/><path d="M915 438 L912 452 L918 452Z M915 506 L912 492 L918 492Z" fill="#1a8cff"/><text transform="translate(902.6,472) rotate(-90) scale(0.97,1)" x="0" y="8.5" text-anchor="middle" font-family="Liberation Sans" font-size="23.2" fill="#1a8cff" stroke="#1a8cff" stroke-width="0.35">M</text><path d="M900 472 L930 472 M915 457.5 L915 486.5" stroke="#c4c4c4" stroke-width="3.3" stroke-linecap="round"/><circle cx="915" cy="472" r="4.6" fill="none" stroke="#b08a20" stroke-width="0.8" stroke-dasharray="1.2 1"/><circle cx="915" cy="472" r="1.7" fill="#5e5016"/><text x="922.6" y="491" font-family="Liberation Sans" font-size="14.3" fill="#f2c22a" stroke="#f2c22a" stroke-width="0.25">Griglia</text></g></svg></svg>
<div class="b" style="left:1138px;top:155px;width:16px;height:577px;background:#fafafa;border-right:1px solid #dedede"></div>
<div class="b" style="left:1143px;top:251px;width:8px;height:325px;background:#808080;border-radius:4px"></div>
<div class="b" style="left:95px;top:732px;width:988px;height:16px;background:#f9f9f9"></div>
<div class="b" style="left:72px;top:732px;width:23px;height:16px;background:#ececec"></div>
<div class="b" style="left:255px;top:737px;width:744px;height:8px;background:#808080;border-radius:4px"></div>
<div class="b" style="left:1083px;top:732px;width:71px;height:16px;background:#e9e9e9"></div>
<div class="t" style="left:153px;width:1000px;text-align:right;top:734.92px;font-size:12.5px;color:#111;">10 &lt; 100</div>
<div class="b" style="left:72px;top:748px;width:1082px;height:1.5px;background:#b4b4b4"></div>
<div class="b" style="left:72px;top:749.5px;width:1082px;height:20.5px;background:#fff"></div>
<div class="b" style="left:72px;top:770px;width:1082px;height:1px;background:#b0b0b0"></div>
<div class="b" style="left:72px;top:771px;width:1082px;height:26.5px;background:#ececec"></div>
<div class="t" style="left:77.4px;top:751.40px;font-size:13px;color:#1a1ad0;"><i>Comando:</i> dimver</div>
<div class="t" style="left:73.4px;top:779.00px;font-size:13px;color:#111;">Dimensione linea posizione:</div>
<div class="b" style="left:243px;top:776px;width:884px;height:18.5px;background:#fff"></div>
<div class="b" style="left:1127.3px;top:772.3px;width:25.5px;height:25.5px;border:1px solid #a8a8a8;background:linear-gradient(#f6f6f6,#e6e6e6)"></div>
<svg class="b" style="left:1133px;top:779px;" width="15" height="11" viewBox="0 0 15 11"><rect x="0.5" y="0.5" width="13.5" height="9.5" fill="none" stroke="#222" stroke-width="1"/><rect x="0.5" y="0.5" width="13.5" height="2" fill="#000"/><rect x="11" y="1" width="1" height="1" fill="#fff"/></svg>
<div class="b" style="left:72px;top:797px;width:1083px;height:1px;background:#c4c4c4"></div>
<div class="b" style="left:1154px;top:108px;width:1px;height:690px;background:#c0c0c0"></div>
<div class="b" style="left:1155px;top:108px;width:300px;height:690px;background:#ececec"></div>
<div class="b" style="left:1155px;top:108px;width:300px;height:23px;background:linear-gradient(#efefef,#e2e2e2)"></div>
<svg class="b" style="left:1156px;top:110px;" width="34" height="17" viewBox="0 0 34 17"><circle cx="8" cy="8.4" r="7" fill="#6a6a6a"/><path d="M5.2 5.6 L10.8 11.2 M10.8 5.6 L5.2 11.2" stroke="#fff" stroke-width="1.8"/><circle cx="26" cy="8.4" r="7" fill="#6a6a6a"/><rect x="23" y="7" width="5.5" height="4.5" fill="none" stroke="#fff" stroke-width="1"/><path d="M24.5 7 L24.5 5.5 L30 5.5 L30 10 L28.5 10" fill="none" stroke="#fff" stroke-width="1"/></svg>
<div class="t" style="left:822.4000000000001px;width:1000px;text-align:center;top:113.04px;font-size:12px;color:#2a2a2a;">Elenco dei livelli</div>
<div class="b" style="left:1155.5px;top:130.8px;width:299px;height:25px;border:1.5px solid #a4a4a4;background:linear-gradient(#f0f0f0,#e4e4e4 40%,#f2f2f2)"></div>
<div class="b" style="left:1214.5px;top:130.8px;width:1.5px;height:25px;background:#a4a4a4"></div>
<div class="b" style="left:1274.5px;top:130.8px;width:1.5px;height:25px;background:#a4a4a4"></div>
<div class="b" style="left:1334.5px;top:130.8px;width:1.5px;height:25px;background:#a4a4a4"></div>
<div class="b" style="left:1394.5px;top:130.8px;width:1.5px;height:25px;background:#a4a4a4"></div>
<div class="b" style="left:1155.5px;top:155px;width:299px;height:1.5px;background:#b0b0b0"></div>
<div class="b" style="left:1155.5px;top:156.5px;width:299px;height:641.5px;background:#fff"></div>
<div class="b" style="left:1156px;top:217.2px;width:298px;height:19.6px;background:#0a4bd6"></div>
<div class="t" style="left:1183px;top:160.20px;font-size:13px;color:#111;">0</div>
<div class="t" style="left:1183px;top:180.20px;font-size:13px;color:#111;">Centro</div>
<div class="t" style="left:1183px;top:200.20px;font-size:13px;color:#111;">Defpoints</div>
<div class="t" style="left:1183px;top:220.20px;font-size:13px;color:#fff;">Quote</div>
<div class="t" style="left:1183px;top:240.20px;font-size:13px;color:#111;">Sottile</div>
<div class="t" style="left:1183px;top:260.20px;font-size:13px;color:#111;">Visibile</div>
<svg class="b" style="left:0px;top:0px;" width="1500" height="844" viewBox="0 0 1500 844"><g transform="translate(1185.5,142.5) scale(1.0)"><ellipse cx="0" cy="0" rx="7.3" ry="5.6" fill="#000"/><path d="M-7.5 -1.5 L-8.3 -0.5 M7.3 -1.2 L8 0" stroke="#000" stroke-width="1"/><ellipse cx="0.2" cy="0.6" rx="5.1" ry="3.4" fill="#fff"/><circle cx="-0.2" cy="-0.6" r="2.9" fill="#000"/><circle cx="0.6" cy="-1.2" r="0.7" fill="#fff" opacity="0.8"/></g><g transform="translate(1245,142.5) scale(1.0)"><ellipse cx="0" cy="0" rx="7.3" ry="5.6" fill="#b4b4b4"/><path d="M-7.5 -1.5 L-8.3 -0.5 M7.3 -1.2 L8 0" stroke="#b4b4b4" stroke-width="1"/><ellipse cx="0.2" cy="0.6" rx="5.1" ry="3.4" fill="#fff"/><circle cx="-0.2" cy="-0.6" r="2.9" fill="#b4b4b4"/><circle cx="0.6" cy="-1.2" r="0.7" fill="#fff" opacity="0.8"/></g><path d="M1299 142.5 L1311 142.5 M1305 136.5 L1305 148.5" stroke="#e00000" stroke-width="2.6"/><path d="M1359 142.5 L1371 142.5" stroke="#e00000" stroke-width="2.6"/><line x1="1419.5" y1="148.5" x2="1431" y2="136.5" stroke="#c08a30" stroke-width="2.6" stroke-linecap="butt"/><line x1="1419.5" y1="148.5" x2="1431" y2="136.5" stroke="#f0c050" stroke-width="1.1700000000000002"/><line x1="1429.0833333333333" y1="138.5" x2="1431" y2="136.5" stroke="#e02020" stroke-width="2.6"/><path d="M1418.3 149.7 L1421.0 147.0" stroke="#444" stroke-width="1.5"/><rect x="1161" y="162.5" width="15.5" height="9" fill="#fff" stroke="#222" stroke-width="1"/><g transform="translate(1423,166.7) scale(1.0)"><ellipse cx="0" cy="0" rx="7.3" ry="5.6" fill="#000"/><path d="M-7.5 -1.5 L-8.3 -0.5 M7.3 -1.2 L8 0" stroke="#000" stroke-width="1"/><ellipse cx="0.2" cy="0.6" rx="5.1" ry="3.4" fill="#fff"/><circle cx="-0.2" cy="-0.6" r="2.9" fill="#000"/><circle cx="0.6" cy="-1.2" r="0.7" fill="#fff" opacity="0.8"/></g><path d="M1441.3 167 L1441.3 164.5 Q1441.3 160.4 1444.8 160.4 Q1448.3 160.4 1448.3 164.5 L1448.3 167" fill="none" stroke="#b8b8b8" stroke-width="1.7"/><rect x="1439.6" y="166.5" width="10.4" height="7" fill="#b8b8b8"/><rect x="1161" y="182.5" width="15.5" height="9" fill="#ff0000" stroke="#222" stroke-width="1"/><g transform="translate(1423,186.7) scale(1.0)"><ellipse cx="0" cy="0" rx="7.3" ry="5.6" fill="#000"/><path d="M-7.5 -1.5 L-8.3 -0.5 M7.3 -1.2 L8 0" stroke="#000" stroke-width="1"/><ellipse cx="0.2" cy="0.6" rx="5.1" ry="3.4" fill="#fff"/><circle cx="-0.2" cy="-0.6" r="2.9" fill="#000"/><circle cx="0.6" cy="-1.2" r="0.7" fill="#fff" opacity="0.8"/></g><path d="M1441.3 187 L1441.3 184.5 Q1441.3 180.4 1444.8 180.4 Q1448.3 180.4 1448.3 184.5 L1448.3 187" fill="none" stroke="#b8b8b8" stroke-width="1.7"/><rect x="1439.6" y="186.5" width="10.4" height="7" fill="#b8b8b8"/><rect x="1161" y="202.5" width="15.5" height="9" fill="#fff" stroke="#222" stroke-width="1"/><g transform="translate(1423,206.7) scale(1.0)"><ellipse cx="0" cy="0" rx="7.3" ry="5.6" fill="#000"/><path d="M-7.5 -1.5 L-8.3 -0.5 M7.3 -1.2 L8 0" stroke="#000" stroke-width="1"/><ellipse cx="0.2" cy="0.6" rx="5.1" ry="3.4" fill="#fff"/><circle cx="-0.2" cy="-0.6" r="2.9" fill="#000"/><circle cx="0.6" cy="-1.2" r="0.7" fill="#fff" opacity="0.8"/></g><path d="M1441.3 207 L1441.3 204.5 Q1441.3 200.4 1444.8 200.4 Q1448.3 200.4 1448.3 204.5 L1448.3 207" fill="none" stroke="#b8b8b8" stroke-width="1.7"/><rect x="1439.6" y="206.5" width="10.4" height="7" fill="#b8b8b8"/><rect x="1161" y="222.5" width="15.5" height="9" fill="#3ab0ff" stroke="#333" stroke-width="1"/><g transform="translate(1423,226.7) scale(1.0)"><ellipse cx="0" cy="0" rx="7.3" ry="5.6" fill="#1a2f70"/><path d="M-7.5 -1.5 L-8.3 -0.5 M7.3 -1.2 L8 0" stroke="#1a2f70" stroke-width="1"/><ellipse cx="0.2" cy="0.6" rx="5.1" ry="3.4" fill="#0a4bd6"/><circle cx="-0.2" cy="-0.6" r="2.9" fill="#1a2f70"/><circle cx="0.6" cy="-1.2" r="0.7" fill="#0a4bd6" opacity="0.8"/></g><g opacity="0.95"><line x1="1395" y1="232.5" x2="1407.5" y2="222" stroke="#c08a30" stroke-width="2.4" stroke-linecap="butt"/><line x1="1395" y1="232.5" x2="1407.5" y2="222" stroke="#f0c050" stroke-width="1.08"/><line x1="1405.4166666666667" y1="223.75" x2="1407.5" y2="222" stroke="#e02020" stroke-width="2.4"/><path d="M1393.8 233.7 L1396.5 231.0" stroke="#444" stroke-width="1.5"/></g><path d="M1441.3 227 L1441.3 224.5 Q1441.3 220.4 1444.8 220.4 Q1448.3 220.4 1448.3 224.5 L1448.3 227" fill="none" stroke="#a8b8d8" stroke-width="1.7"/><rect x="1439.6" y="226.5" width="10.4" height="7" fill="#a8b8d8"/><rect x="1161" y="242.5" width="15.5" height="9" fill="#000" stroke="#222" stroke-width="1"/><g transform="translate(1423,246.7) scale(1.0)"><ellipse cx="0" cy="0" rx="7.3" ry="5.6" fill="#000"/><path d="M-7.5 -1.5 L-8.3 -0.5 M7.3 -1.2 L8 0" stroke="#000" stroke-width="1"/><ellipse cx="0.2" cy="0.6" rx="5.1" ry="3.4" fill="#fff"/><circle cx="-0.2" cy="-0.6" r="2.9" fill="#000"/><circle cx="0.6" cy="-1.2" r="0.7" fill="#fff" opacity="0.8"/></g><path d="M1441.3 247 L1441.3 244.5 Q1441.3 240.4 1444.8 240.4 Q1448.3 240.4 1448.3 244.5 L1448.3 247" fill="none" stroke="#b8b8b8" stroke-width="1.7"/><rect x="1439.6" y="246.5" width="10.4" height="7" fill="#b8b8b8"/><rect x="1161" y="262.5" width="15.5" height="9" fill="#000" stroke="#222" stroke-width="1"/><g transform="translate(1423,266.7) scale(1.0)"><ellipse cx="0" cy="0" rx="7.3" ry="5.6" fill="#000"/><path d="M-7.5 -1.5 L-8.3 -0.5 M7.3 -1.2 L8 0" stroke="#000" stroke-width="1"/><ellipse cx="0.2" cy="0.6" rx="5.1" ry="3.4" fill="#fff"/><circle cx="-0.2" cy="-0.6" r="2.9" fill="#000"/><circle cx="0.6" cy="-1.2" r="0.7" fill="#fff" opacity="0.8"/></g><path d="M1441.3 267 L1441.3 264.5 Q1441.3 260.4 1444.8 260.4 Q1448.3 260.4 1448.3 264.5 L1448.3 267" fill="none" stroke="#b8b8b8" stroke-width="1.7"/><rect x="1439.6" y="266.5" width="10.4" height="7" fill="#b8b8b8"/></svg>
<div class="b" style="left:1454px;top:108px;width:1px;height:690px;background:#c8c8c8"></div>
<div class="b" style="left:1455px;top:108px;width:45px;height:690px;background:linear-gradient(90deg,#ececec 0px,#e6e6e6 12px,#d2d2d2 40px,#c0c0c0 45px)"></div>
<div class="b" style="left:1463px;top:116.5px;width:2px;height:2px;background:#a0a0a0"></div>
<div class="b" style="left:1469px;top:116.5px;width:2px;height:2px;background:#a0a0a0"></div>
<div class="b" style="left:1475px;top:116.5px;width:2px;height:2px;background:#a0a0a0"></div>
<div class="b" style="left:1481px;top:116.5px;width:2px;height:2px;background:#a0a0a0"></div>
<div class="b" style="left:1487px;top:116.5px;width:2px;height:2px;background:#a0a0a0"></div>
<div class="b" style="left:1457px;top:120px;width:41.5px;height:42px;background:#b8b8b8;border-radius:6px"></div>
<svg class="b" style="left:0px;top:0px;" width="1500" height="844" viewBox="0 0 1500 844"><rect x="1463.5" y="127.5" width="27" height="27" fill="#fff" stroke="#222" stroke-width="1"/><rect x="1463.5" y="127.5" width="27" height="4" fill="#000"/><rect x="1464.4" y="128.3" width="3.3" height="3" fill="#fff"/><path d="M1470 140.5 L1478 137 L1478 147.5 L1470 151Z" fill="#aaa" stroke="#555" stroke-width="0.7"/><path d="M1472.5 140 L1480.5 136.5 L1480.5 147 L1472.5 150.5Z" fill="#ccc" stroke="#555" stroke-width="0.7"/><path d="M1475 139.5 L1484 135.8 L1484 146.5 L1475 150.2Z" fill="#fff" stroke="#555" stroke-width="0.7"/><path d="M1477 148 L1481.5 140 L1482 147 Z" fill="none" stroke="#f44" stroke-width="0.7"/><rect x="1463.5" y="174.5" width="27" height="27" fill="#fff" stroke="#222" stroke-width="1"/><rect x="1463.5" y="174.5" width="27" height="4" fill="#000"/><rect x="1464.4" y="175.3" width="3.3" height="3" fill="#fff"/><rect x="1470" y="184.5" width="10" height="7" fill="#f4eab0" stroke="#666" stroke-width="0.7"/><circle cx="1479.5" cy="191" r="4.2" fill="#f4eab0" fill-opacity="0.85" stroke="#666" stroke-width="0.7"/><rect x="1463.5" y="221.5" width="27" height="27" fill="#fff" stroke="#222" stroke-width="1"/><rect x="1463.5" y="221.5" width="27" height="4" fill="#000"/><rect x="1464.4" y="222.3" width="3.3" height="3" fill="#fff"/><rect x="1469.5" y="231.5" width="16" height="12" rx="2" fill="#f4f4f4" stroke="#c8d4e8" stroke-width="1"/><rect x="1457.0" y="263" width="1" height="1" fill="#777"/><rect x="1460.5" y="263" width="1" height="1" fill="#777"/><rect x="1464.0" y="263" width="1" height="1" fill="#777"/><rect x="1467.5" y="263" width="1" height="1" fill="#777"/><rect x="1471.0" y="263" width="1" height="1" fill="#777"/><rect x="1474.5" y="263" width="1" height="1" fill="#777"/><rect x="1478.0" y="263" width="1" height="1" fill="#777"/><rect x="1481.5" y="263" width="1" height="1" fill="#777"/><rect x="1485.0" y="263" width="1" height="1" fill="#777"/><rect x="1488.5" y="263" width="1" height="1" fill="#777"/><rect x="1492.0" y="263" width="1" height="1" fill="#777"/><rect x="1495.5" y="263" width="1" height="1" fill="#777"/><rect x="1463.5" y="275.5" width="27" height="27" fill="#fff" stroke="#222" stroke-width="1"/><rect x="1463.5" y="275.5" width="27" height="4" fill="#000"/><rect x="1464.4" y="276.3" width="3.3" height="3" fill="#fff"/><rect x="1468" y="285" width="4" height="3" fill="#000"/><rect x="1474" y="285" width="12" height="3" fill="none" stroke="#000" stroke-width="0.8"/><rect x="1468" y="291" width="4" height="3" fill="#000"/><rect x="1474" y="291" width="12" height="3" fill="none" stroke="#000" stroke-width="0.8"/><rect x="1468" y="297" width="4" height="3" fill="#000"/><rect x="1474" y="297" width="12" height="3" fill="none" stroke="#000" stroke-width="0.8"/><rect x="1463.5" y="322.5" width="27" height="27" fill="#fff" stroke="#222" stroke-width="1"/><rect x="1463.5" y="322.5" width="27" height="4" fill="#000"/><rect x="1464.4" y="323.3" width="3.3" height="3" fill="#fff"/><defs><linearGradient id="fun" x1="0" y1="0" x2="1" y2="0"><stop offset="0" stop-color="#777"/><stop offset="0.5" stop-color="#ccc"/><stop offset="1" stop-color="#777"/></linearGradient></defs><ellipse cx="1477" cy="332.5" rx="7" ry="1.6" fill="#999"/><path d="M1470 332.5 L1484 332.5 L1479 339.5 L1479 346 L1475.5 344.5 L1475.5 339.5Z" fill="url(#fun)" stroke="#555" stroke-width="0.5"/><rect x="1463.5" y="368.5" width="27" height="27" fill="#fff" stroke="#222" stroke-width="1"/><rect x="1463.5" y="368.5" width="27" height="4" fill="#000"/><rect x="1464.4" y="369.3" width="3.3" height="3" fill="#fff"/><path d="M1469 376 L1469 392 L1476 386 L1476 382Z" fill="#fff" stroke="#333" stroke-width="0.8"/><rect x="1476" y="380" width="8" height="8" fill="#999" stroke="#555" stroke-width="0.6"/><path d="M1466 384 L1488 384" stroke="#f88" stroke-width="0.6" stroke-dasharray="1.5 1"/><rect x="1457.0" y="409" width="1" height="1" fill="#777"/><rect x="1460.5" y="409" width="1" height="1" fill="#777"/><rect x="1464.0" y="409" width="1" height="1" fill="#777"/><rect x="1467.5" y="409" width="1" height="1" fill="#777"/><rect x="1471.0" y="409" width="1" height="1" fill="#777"/><rect x="1474.5" y="409" width="1" height="1" fill="#777"/><rect x="1478.0" y="409" width="1" height="1" fill="#777"/><rect x="1481.5" y="409" width="1" height="1" fill="#777"/><rect x="1485.0" y="409" width="1" height="1" fill="#777"/><rect x="1488.5" y="409" width="1" height="1" fill="#777"/><rect x="1492.0" y="409" width="1" height="1" fill="#777"/><rect x="1495.5" y="409" width="1" height="1" fill="#777"/></svg>
<div class="b" style="left:1457px;top:417px;width:41.5px;height:42px;background:#b8b8b8;border-radius:6px"></div>
<svg class="b" style="left:0px;top:0px;" width="1500" height="844" viewBox="0 0 1500 844"><rect x="1463.5" y="424.5" width="27" height="27" fill="#fff" stroke="#222" stroke-width="1"/><rect x="1463.5" y="424.5" width="27" height="4" fill="#000"/><rect x="1464.4" y="425.3" width="3.3" height="3" fill="#fff"/><g fill="#888"><rect x="1467" y="431" width="9" height="0.8"/><rect x="1467" y="434" width="12" height="0.8"/><rect x="1467" y="437" width="11" height="0.8"/><rect x="1467" y="440" width="12" height="0.8"/></g><rect x="1464" y="445" width="26" height="0.8" fill="#333"/><rect x="1466" y="447.5" width="2" height="0.8" fill="#333"/><rect x="1474" y="447.5" width="13" height="0.8" fill="#333"/><rect x="1463.5" y="471.5" width="27" height="27" fill="#fff" stroke="#222" stroke-width="1"/><rect x="1463.5" y="471.5" width="27" height="4" fill="#000"/><rect x="1464.4" y="472.3" width="3.3" height="3" fill="#fff"/><rect x="1469.5" y="479.5" width="14.5" height="16.5" rx="1" fill="#c8841a" stroke="#9a6010" stroke-width="0.5"/><rect x="1471.3" y="481.3" width="11" height="13" fill="#fafafa"/><rect x="1474" y="478" width="5.5" height="3.2" fill="#8a8a80"/><g stroke="#bbb" stroke-width="0.7"><line x1="1473" y1="485" x2="1480" y2="485"/><line x1="1473" y1="487.5" x2="1480" y2="487.5"/><line x1="1473" y1="490" x2="1478" y2="490"/></g><path d="M1482 491 L1482 494 L1479 494Z" fill="#aaa"/></svg>
<div class="b" style="left:0px;top:798px;width:1500px;height:46px;background:#dcdcdc"></div>
<div class="b" style="left:0px;top:798px;width:1500px;height:1px;background:#d0d0d0"></div>
<div class="t" style="left:2px;top:807.53px;font-size:10px;color:#1a1a1a;letter-spacing:0.12px">140,0</div>
<div class="t" style="left:2px;top:827.53px;font-size:10px;color:#1a1a1a;letter-spacing:0.12px">@21.5,-9</div>
<div class="b" style="left:253.5px;top:802px;width:1px;height:40px;background:#8a8a8a"></div>
<div class="b" style="left:254px;top:802px;width:2px;height:1px;background:#8a8a8a"></div>
<div class="b" style="left:254px;top:841px;width:2px;height:1px;background:#8a8a8a"></div>
<div class="t" style="left:256px;top:807.53px;font-size:10px;color:#1a1a1a;letter-spacing:0.12px">140&lt;0°</div>
<div class="t" style="left:256px;top:827.53px;font-size:10px;color:#1a1a1a;letter-spacing:0.12px">@23.3077&lt;337°</div>
<div class="b" style="left:506.2px;top:818.8px;width:6px;height:6px;background:#c6c6c6;border-radius:50%"></div>
<div class="b" style="left:940px;top:818.8px;width:6px;height:6px;background:#c6c6c6;border-radius:50%"></div>
<div class="b" style="left:1269px;top:818.8px;width:6px;height:6px;background:#c6c6c6;border-radius:50%"></div>
<div class="t" style="left:575.8px;top:817.53px;font-size:10px;color:#1a1a1a;letter-spacing:0.12px">Dimensione linea posizione</div>
<svg class="b" style="left:716px;top:805px;" width="20" height="32" viewBox="0 0 20 32"><path d="M9.5 1 Q18.5 1 18.5 11 L18.5 21 Q18.5 30.5 9.5 30.5 Q0.8 30.5 0.8 21 L0.8 11 Q0.8 1 9.5 1Z" fill="#fff" stroke="#333" stroke-width="0.9"/><path d="M0.8 13.5 L18.5 13.5 M9.6 1 L9.6 13.5" stroke="#333" stroke-width="0.9"/><rect x="7.7" y="3.5" width="3.8" height="7.5" rx="1.9" fill="#fff" stroke="#333" stroke-width="0.9"/></svg>
<div class="t" style="left:754.1px;top:817.53px;font-size:10px;color:#1a1a1a;letter-spacing:0.12px">Indietro</div>
<div class="t" style="left:949px;top:817.53px;font-size:10px;color:#1a1a1a;letter-spacing:0.12px">Nessun entità selezionate.</div>
</body></html>
